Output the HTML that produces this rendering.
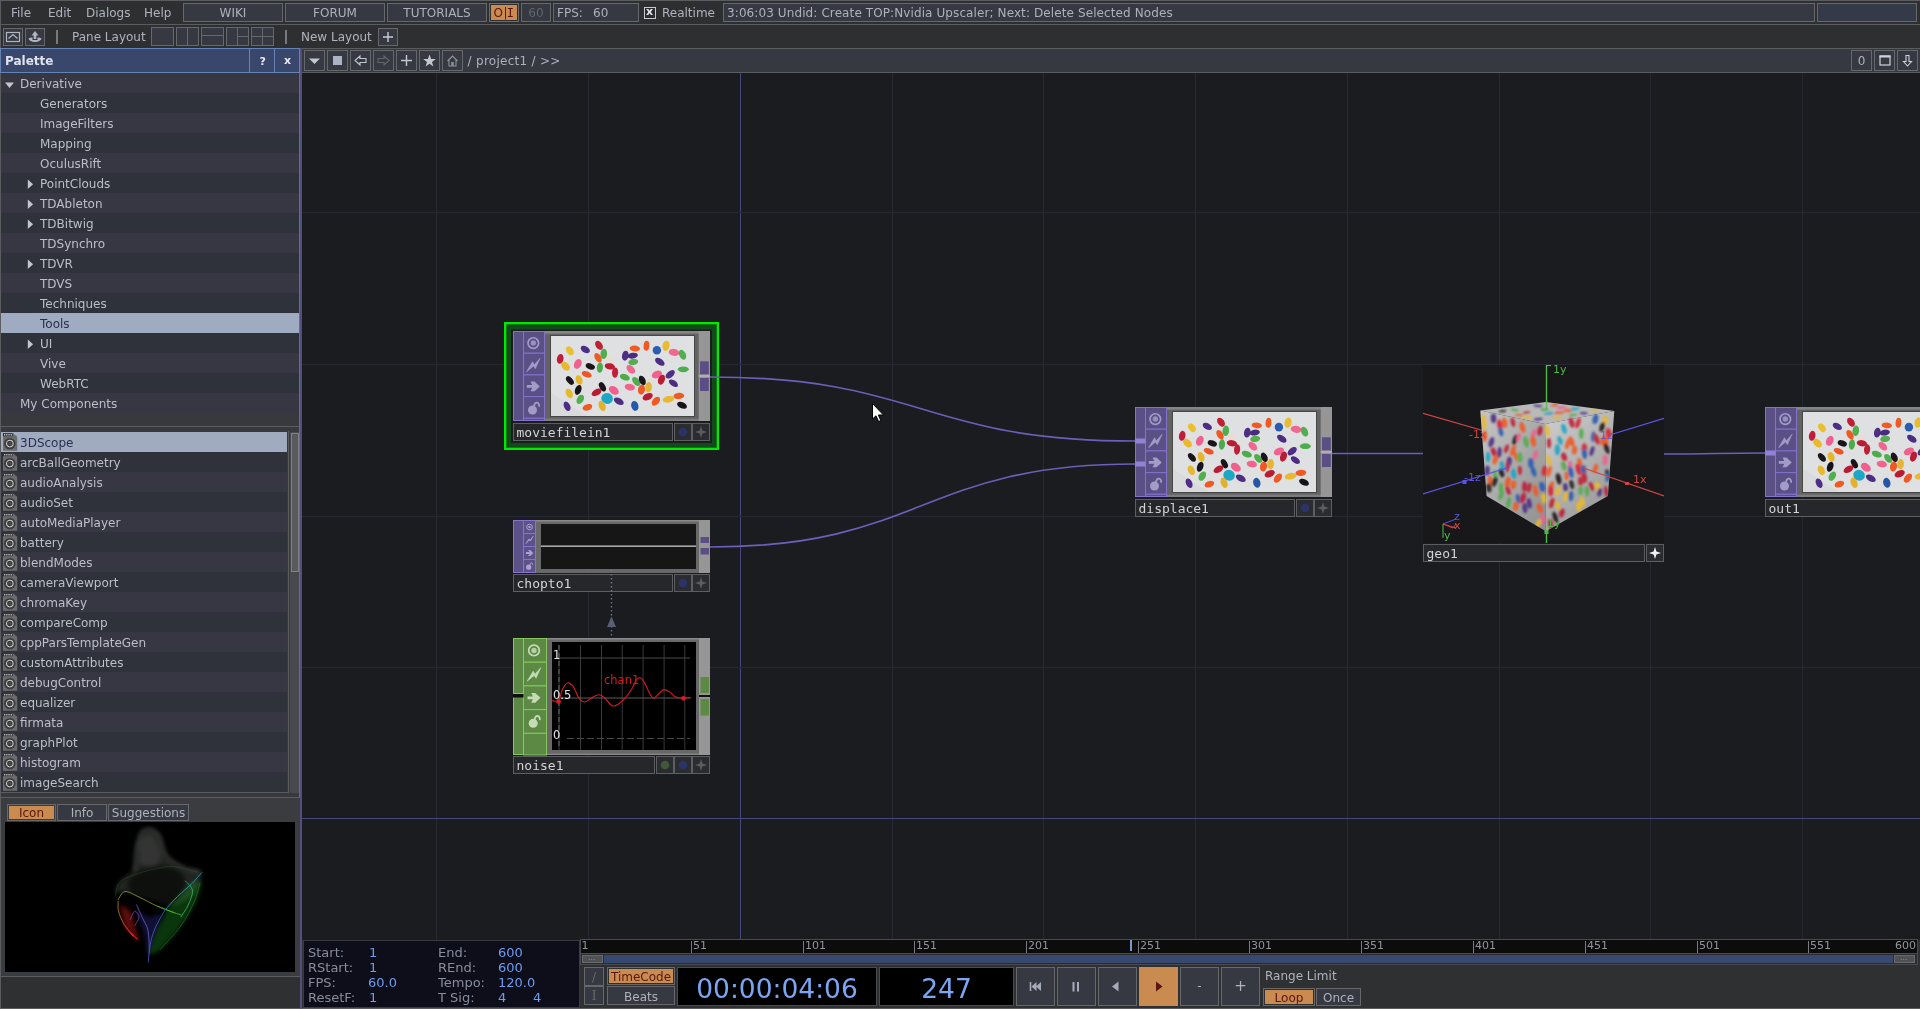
<!DOCTYPE html><html><head><meta charset="utf-8"><title>TouchDesigner</title><style>
*{box-sizing:border-box;margin:0;padding:0}
html,body{width:1920px;height:1009px;overflow:hidden;background:#2e2f31}
body{position:relative;font-family:"DejaVu Sans","Liberation Sans",sans-serif;font-size:12px;color:#adb1bc;line-height:1}
.a{position:absolute}
.btn{position:absolute;background:#373942;border:1px solid #67686c;color:#adb1bc;text-align:center;white-space:nowrap}
.t{position:absolute;white-space:pre;line-height:14px;height:14px}
.row{position:absolute;left:1px;width:298px;height:20px}
.row span{position:absolute;margin-left:1px;top:4px;line-height:14px;white-space:pre;color:#bcbfc8}
.lrow{position:absolute;left:1px;width:286px;height:20px}
.lrow span{position:absolute;left:19px;top:4px;line-height:14px;white-space:pre;color:#bcbfc8}
.mono{font-family:"DejaVu Sans Mono","Liberation Mono",monospace;font-size:13px;color:#d2d2d2}
.nm{position:absolute;background:#26272b;border:1px solid #5d5e62;height:18px}
.nm span{position:absolute;left:3px;top:0px;line-height:16px;white-space:pre}
</style></head><body><div id="root" style="position:absolute;left:0;top:0;width:1920px;height:1009px;will-change:transform">
<div class="a" style="left:0;top:0;width:1920px;height:1px;background:#5b5c5f"></div>
<div class="a" style="left:0;top:1px;width:1px;height:1008px;background:#5b5c5f"></div>
<div class="a" style="left:0;top:24px;width:1920px;height:1px;background:#5b5c5f"></div>
<div class="t" style="left:11px;top:6px;color:#afb3be">File</div>
<div class="t" style="left:48px;top:6px;color:#afb3be">Edit</div>
<div class="t" style="left:86px;top:6px;color:#afb3be">Dialogs</div>
<div class="t" style="left:144px;top:6px;color:#afb3be">Help</div>
<div class="btn" style="left:183px;top:3px;width:100px;height:19px;line-height:19px">WIKI</div>
<div class="btn" style="left:285px;top:3px;width:100px;height:19px;line-height:19px">FORUM</div>
<div class="btn" style="left:387px;top:3px;width:100px;height:19px;line-height:19px">TUTORIALS</div>
<div class="btn" style="left:489px;top:3px;width:30px;height:19px;line-height:19px;background:#c98b4f;border-color:#6b6c70;color:#5a1510;box-shadow:inset 0 0 0 1px #2e2f31;letter-spacing:0.4px">O|<span style="font-family:'DejaVu Sans Mono','Liberation Mono',monospace;margin-left:-1px">I</span></div>
<div class="btn" style="left:521px;top:3px;width:30px;height:19px;line-height:19px;color:#62646c">60</div>
<div class="btn" style="left:553px;top:3px;width:86px;height:19px;line-height:19px;text-align:left;padding-left:3px;white-space:pre;word-spacing:1.3px">FPS:  60</div>
<div class="a" style="left:644px;top:7px;width:12px;height:12px;border:1px solid #c8cad0;background:#2b2c30"></div>
<div class="t" style="left:646px;top:5px;font-size:11px;font-weight:bold;color:#e6e8ee">x</div>
<div class="t" style="left:662px;top:6px;color:#afb3be">Realtime</div>
<div class="btn" style="left:723px;top:3px;width:1092px;height:19px;line-height:19px;text-align:left;padding-left:3px;letter-spacing:0.1px">3:06:03 Undid: Create TOP:Nvidia Upscaler; Next: Delete Selected Nodes</div>
<div class="btn" style="left:1817px;top:3px;width:100px;height:19px;background:#353a48"></div>
<div class="btn" style="left:3px;top:28px;width:20px;height:18px"></div>
<svg class="a" style="left:3px;top:28px" width="20" height="18"><rect x="3.5" y="4.5" width="13" height="9" fill="none" stroke="#b0b5c2" stroke-width="1.2"/><path d="M5.5 10.5 L10 6.5 L14.5 10.5" fill="none" stroke="#b0b5c2" stroke-width="1.2"/></svg>
<div class="btn" style="left:25px;top:28px;width:20px;height:18px"></div>
<svg class="a" style="left:25px;top:28px" width="20" height="18"><path d="M10 3 L13.5 7.5 H11.3 V11 H8.7 V7.5 H6.5 Z" fill="#b0b5c2"/><path d="M3.5 10.5 C5 9.5 6.5 9.2 7.5 9.5 V12 H12.5 V9.5 C13.5 9.2 15 9.5 16.5 10.5 C16 12.5 13 14 10 14 C7 14 4 12.5 3.5 10.5 Z" fill="#b0b5c2"/></svg>
<div class="a" style="left:56px;top:30px;width:2px;height:14px;background:#77797f"></div>
<div class="t" style="left:72px;top:30px;color:#afb3be">Pane Layout</div>
<div class="btn" style="left:151px;top:27px;width:23px;height:19px"></div>
<div class="btn" style="left:176px;top:27px;width:23px;height:19px"></div>
<div class="btn" style="left:201px;top:27px;width:23px;height:19px"></div>
<div class="btn" style="left:226px;top:27px;width:23px;height:19px"></div>
<div class="btn" style="left:251px;top:27px;width:23px;height:19px"></div>
<div class="a" style="left:187px;top:28px;width:1px;height:17px;background:#67686c"></div>
<div class="a" style="left:202px;top:35px;width:21px;height:1px;background:#67686c"></div>
<div class="a" style="left:237px;top:28px;width:1px;height:17px;background:#67686c"></div>
<div class="a" style="left:237px;top:36px;width:11px;height:1px;background:#67686c"></div>
<div class="a" style="left:262px;top:28px;width:1px;height:17px;background:#67686c"></div>
<div class="a" style="left:252px;top:36px;width:21px;height:1px;background:#67686c"></div>
<div class="a" style="left:285px;top:30px;width:2px;height:14px;background:#77797f"></div>
<div class="t" style="left:301px;top:30px;color:#afb3be">New Layout</div>
<div class="btn" style="left:378px;top:28px;width:20px;height:18px"></div>
<svg class="a" style="left:378px;top:28px" width="20" height="18"><path d="M10 4 V14 M5 9 H15" stroke="#c6cad2" stroke-width="1.4"/></svg>
<div class="a" style="left:0px;top:48px;width:300px;height:25px;background:#38476b;border:1px solid #6584b6"></div>
<div class="a" style="left:249px;top:49px;width:1px;height:23px;background:#6584b6"></div>
<div class="a" style="left:274px;top:49px;width:1px;height:23px;background:#6584b6"></div>
<div class="t" style="left:5px;top:53px;font-size:12px;font-weight:bold;color:#dfe3ee;line-height:16px;height:16px">Palette</div>
<div class="t" style="left:259.4px;top:54.5px;font-size:11px;font-weight:bold;color:#e8eaf2">?</div>
<div class="t" style="left:284px;top:53.5px;font-size:11px;font-weight:bold;color:#e8eaf2">x</div>
<div class="a" style="left:1px;top:73px;width:299px;height:354px;background:#38393d"></div>
<div class="row" style="top:73px;background:#363742"><span style="left:18px;">Derivative</span></div>
<svg class="a" style="left:3px;top:79px" width="14" height="12"><path d="M2 3.5 H11 L6.5 9.1 Z" fill="#c3c6cd"/></svg>
<div class="row" style="top:93px;background:#2f313b"><span style="left:38px;">Generators</span></div>
<div class="row" style="top:113px;background:#363742"><span style="left:38px;">ImageFilters</span></div>
<div class="row" style="top:133px;background:#2f313b"><span style="left:38px;">Mapping</span></div>
<div class="row" style="top:153px;background:#363742"><span style="left:38px;">OculusRift</span></div>
<div class="row" style="top:173px;background:#2f313b"><span style="left:38px;">PointClouds</span></div>
<svg class="a" style="left:24px;top:176px" width="11" height="15"><path d="M3.8 3.4 V13 L9.1 8.2 Z" fill="#c3c6cd"/></svg>
<div class="row" style="top:193px;background:#363742"><span style="left:38px;">TDAbleton</span></div>
<svg class="a" style="left:24px;top:196px" width="11" height="15"><path d="M3.8 3.4 V13 L9.1 8.2 Z" fill="#c3c6cd"/></svg>
<div class="row" style="top:213px;background:#2f313b"><span style="left:38px;">TDBitwig</span></div>
<svg class="a" style="left:24px;top:216px" width="11" height="15"><path d="M3.8 3.4 V13 L9.1 8.2 Z" fill="#c3c6cd"/></svg>
<div class="row" style="top:233px;background:#363742"><span style="left:38px;">TDSynchro</span></div>
<div class="row" style="top:253px;background:#2f313b"><span style="left:38px;">TDVR</span></div>
<svg class="a" style="left:24px;top:256px" width="11" height="15"><path d="M3.8 3.4 V13 L9.1 8.2 Z" fill="#c3c6cd"/></svg>
<div class="row" style="top:273px;background:#363742"><span style="left:38px;">TDVS</span></div>
<div class="row" style="top:293px;background:#2f313b"><span style="left:38px;">Techniques</span></div>
<div class="row" style="top:313px;background:#9fabc0"><span style="left:38px;color:#2a3050">Tools</span></div>
<div class="row" style="top:333px;background:#2f313b"><span style="left:38px;">UI</span></div>
<svg class="a" style="left:24px;top:336px" width="11" height="15"><path d="M3.8 3.4 V13 L9.1 8.2 Z" fill="#c3c6cd"/></svg>
<div class="row" style="top:353px;background:#363742"><span style="left:38px;">Vive</span></div>
<div class="row" style="top:373px;background:#2f313b"><span style="left:38px;">WebRTC</span></div>
<div class="row" style="top:393px;background:#363742"><span style="left:18px;">My Components</span></div>
<div class="a" style="left:1px;top:426px;width:299px;height:1px;background:#5b5c5f"></div>
<div class="a" style="left:1px;top:427px;width:299px;height:371px;background:#38393d"></div>
<div class="a" style="left:1px;top:431px;width:288px;height:362px;border:1px solid #5b5c5f;border-top:none;border-left:none"></div>
<div class="lrow" style="top:432px;background:#a0abc0"><span style="color:#2a3050">3DScope</span></div>
<svg class="a" style="left:0px;top:432px" width="20" height="20"><path d="M3 1.2 H13 L17.2 4.8 V18.8 H3 Z" fill="#6c6c6e"/><path d="M3 1.2 H12.6 V4.2 H3 Z" fill="#2c2c2e"/><path d="M4 2.7 H12" stroke="#c4c4c4" stroke-width="1.6" stroke-dasharray="1.3 0.9"/><circle cx="9.8" cy="11.6" r="5.7" fill="#3b3b3d"/><circle cx="9.8" cy="11.6" r="3.3" fill="none" stroke="#cdcdcd" stroke-width="1.05"/><circle cx="9.8" cy="11.6" r="1.3" fill="#505052"/></svg>
<div class="lrow" style="top:452px;background:#2f313b"><span style="">arcBallGeometry</span></div>
<svg class="a" style="left:0px;top:452px" width="20" height="20"><path d="M3 1.2 H13 L17.2 4.8 V18.8 H3 Z" fill="#6c6c6e"/><path d="M3 1.2 H12.6 V4.2 H3 Z" fill="#2c2c2e"/><path d="M4 2.7 H12" stroke="#c4c4c4" stroke-width="1.6" stroke-dasharray="1.3 0.9"/><circle cx="9.8" cy="11.6" r="5.7" fill="#3b3b3d"/><circle cx="9.8" cy="11.6" r="3.3" fill="none" stroke="#cdcdcd" stroke-width="1.05"/><circle cx="9.8" cy="11.6" r="1.3" fill="#505052"/></svg>
<div class="lrow" style="top:472px;background:#363742"><span style="">audioAnalysis</span></div>
<svg class="a" style="left:0px;top:472px" width="20" height="20"><path d="M3 1.2 H13 L17.2 4.8 V18.8 H3 Z" fill="#6c6c6e"/><path d="M3 1.2 H12.6 V4.2 H3 Z" fill="#2c2c2e"/><path d="M4 2.7 H12" stroke="#c4c4c4" stroke-width="1.6" stroke-dasharray="1.3 0.9"/><circle cx="9.8" cy="11.6" r="5.7" fill="#3b3b3d"/><circle cx="9.8" cy="11.6" r="3.3" fill="none" stroke="#cdcdcd" stroke-width="1.05"/><circle cx="9.8" cy="11.6" r="1.3" fill="#505052"/></svg>
<div class="lrow" style="top:492px;background:#2f313b"><span style="">audioSet</span></div>
<svg class="a" style="left:0px;top:492px" width="20" height="20"><path d="M3 1.2 H13 L17.2 4.8 V18.8 H3 Z" fill="#6c6c6e"/><path d="M3 1.2 H12.6 V4.2 H3 Z" fill="#2c2c2e"/><path d="M4 2.7 H12" stroke="#c4c4c4" stroke-width="1.6" stroke-dasharray="1.3 0.9"/><circle cx="9.8" cy="11.6" r="5.7" fill="#3b3b3d"/><circle cx="9.8" cy="11.6" r="3.3" fill="none" stroke="#cdcdcd" stroke-width="1.05"/><circle cx="9.8" cy="11.6" r="1.3" fill="#505052"/></svg>
<div class="lrow" style="top:512px;background:#363742"><span style="">autoMediaPlayer</span></div>
<svg class="a" style="left:0px;top:512px" width="20" height="20"><path d="M3 1.2 H13 L17.2 4.8 V18.8 H3 Z" fill="#6c6c6e"/><path d="M3 1.2 H12.6 V4.2 H3 Z" fill="#2c2c2e"/><path d="M4 2.7 H12" stroke="#c4c4c4" stroke-width="1.6" stroke-dasharray="1.3 0.9"/><circle cx="9.8" cy="11.6" r="5.7" fill="#3b3b3d"/><circle cx="9.8" cy="11.6" r="3.3" fill="none" stroke="#cdcdcd" stroke-width="1.05"/><circle cx="9.8" cy="11.6" r="1.3" fill="#505052"/></svg>
<div class="lrow" style="top:532px;background:#2f313b"><span style="">battery</span></div>
<svg class="a" style="left:0px;top:532px" width="20" height="20"><path d="M3 1.2 H13 L17.2 4.8 V18.8 H3 Z" fill="#6c6c6e"/><path d="M3 1.2 H12.6 V4.2 H3 Z" fill="#2c2c2e"/><path d="M4 2.7 H12" stroke="#c4c4c4" stroke-width="1.6" stroke-dasharray="1.3 0.9"/><circle cx="9.8" cy="11.6" r="5.7" fill="#3b3b3d"/><circle cx="9.8" cy="11.6" r="3.3" fill="none" stroke="#cdcdcd" stroke-width="1.05"/><circle cx="9.8" cy="11.6" r="1.3" fill="#505052"/></svg>
<div class="lrow" style="top:552px;background:#363742"><span style="">blendModes</span></div>
<svg class="a" style="left:0px;top:552px" width="20" height="20"><path d="M3 1.2 H13 L17.2 4.8 V18.8 H3 Z" fill="#6c6c6e"/><path d="M3 1.2 H12.6 V4.2 H3 Z" fill="#2c2c2e"/><path d="M4 2.7 H12" stroke="#c4c4c4" stroke-width="1.6" stroke-dasharray="1.3 0.9"/><circle cx="9.8" cy="11.6" r="5.7" fill="#3b3b3d"/><circle cx="9.8" cy="11.6" r="3.3" fill="none" stroke="#cdcdcd" stroke-width="1.05"/><circle cx="9.8" cy="11.6" r="1.3" fill="#505052"/></svg>
<div class="lrow" style="top:572px;background:#2f313b"><span style="">cameraViewport</span></div>
<svg class="a" style="left:0px;top:572px" width="20" height="20"><path d="M3 1.2 H13 L17.2 4.8 V18.8 H3 Z" fill="#6c6c6e"/><path d="M3 1.2 H12.6 V4.2 H3 Z" fill="#2c2c2e"/><path d="M4 2.7 H12" stroke="#c4c4c4" stroke-width="1.6" stroke-dasharray="1.3 0.9"/><circle cx="9.8" cy="11.6" r="5.7" fill="#3b3b3d"/><circle cx="9.8" cy="11.6" r="3.3" fill="none" stroke="#cdcdcd" stroke-width="1.05"/><circle cx="9.8" cy="11.6" r="1.3" fill="#505052"/></svg>
<div class="lrow" style="top:592px;background:#363742"><span style="">chromaKey</span></div>
<svg class="a" style="left:0px;top:592px" width="20" height="20"><path d="M3 1.2 H13 L17.2 4.8 V18.8 H3 Z" fill="#6c6c6e"/><path d="M3 1.2 H12.6 V4.2 H3 Z" fill="#2c2c2e"/><path d="M4 2.7 H12" stroke="#c4c4c4" stroke-width="1.6" stroke-dasharray="1.3 0.9"/><circle cx="9.8" cy="11.6" r="5.7" fill="#3b3b3d"/><circle cx="9.8" cy="11.6" r="3.3" fill="none" stroke="#cdcdcd" stroke-width="1.05"/><circle cx="9.8" cy="11.6" r="1.3" fill="#505052"/></svg>
<div class="lrow" style="top:612px;background:#2f313b"><span style="">compareComp</span></div>
<svg class="a" style="left:0px;top:612px" width="20" height="20"><path d="M3 1.2 H13 L17.2 4.8 V18.8 H3 Z" fill="#6c6c6e"/><path d="M3 1.2 H12.6 V4.2 H3 Z" fill="#2c2c2e"/><path d="M4 2.7 H12" stroke="#c4c4c4" stroke-width="1.6" stroke-dasharray="1.3 0.9"/><circle cx="9.8" cy="11.6" r="5.7" fill="#3b3b3d"/><circle cx="9.8" cy="11.6" r="3.3" fill="none" stroke="#cdcdcd" stroke-width="1.05"/><circle cx="9.8" cy="11.6" r="1.3" fill="#505052"/></svg>
<div class="lrow" style="top:632px;background:#363742"><span style="">cppParsTemplateGen</span></div>
<svg class="a" style="left:0px;top:632px" width="20" height="20"><path d="M3 1.2 H13 L17.2 4.8 V18.8 H3 Z" fill="#6c6c6e"/><path d="M3 1.2 H12.6 V4.2 H3 Z" fill="#2c2c2e"/><path d="M4 2.7 H12" stroke="#c4c4c4" stroke-width="1.6" stroke-dasharray="1.3 0.9"/><circle cx="9.8" cy="11.6" r="5.7" fill="#3b3b3d"/><circle cx="9.8" cy="11.6" r="3.3" fill="none" stroke="#cdcdcd" stroke-width="1.05"/><circle cx="9.8" cy="11.6" r="1.3" fill="#505052"/></svg>
<div class="lrow" style="top:652px;background:#2f313b"><span style="">customAttributes</span></div>
<svg class="a" style="left:0px;top:652px" width="20" height="20"><path d="M3 1.2 H13 L17.2 4.8 V18.8 H3 Z" fill="#6c6c6e"/><path d="M3 1.2 H12.6 V4.2 H3 Z" fill="#2c2c2e"/><path d="M4 2.7 H12" stroke="#c4c4c4" stroke-width="1.6" stroke-dasharray="1.3 0.9"/><circle cx="9.8" cy="11.6" r="5.7" fill="#3b3b3d"/><circle cx="9.8" cy="11.6" r="3.3" fill="none" stroke="#cdcdcd" stroke-width="1.05"/><circle cx="9.8" cy="11.6" r="1.3" fill="#505052"/></svg>
<div class="lrow" style="top:672px;background:#363742"><span style="">debugControl</span></div>
<svg class="a" style="left:0px;top:672px" width="20" height="20"><path d="M3 1.2 H13 L17.2 4.8 V18.8 H3 Z" fill="#6c6c6e"/><path d="M3 1.2 H12.6 V4.2 H3 Z" fill="#2c2c2e"/><path d="M4 2.7 H12" stroke="#c4c4c4" stroke-width="1.6" stroke-dasharray="1.3 0.9"/><circle cx="9.8" cy="11.6" r="5.7" fill="#3b3b3d"/><circle cx="9.8" cy="11.6" r="3.3" fill="none" stroke="#cdcdcd" stroke-width="1.05"/><circle cx="9.8" cy="11.6" r="1.3" fill="#505052"/></svg>
<div class="lrow" style="top:692px;background:#2f313b"><span style="">equalizer</span></div>
<svg class="a" style="left:0px;top:692px" width="20" height="20"><path d="M3 1.2 H13 L17.2 4.8 V18.8 H3 Z" fill="#6c6c6e"/><path d="M3 1.2 H12.6 V4.2 H3 Z" fill="#2c2c2e"/><path d="M4 2.7 H12" stroke="#c4c4c4" stroke-width="1.6" stroke-dasharray="1.3 0.9"/><circle cx="9.8" cy="11.6" r="5.7" fill="#3b3b3d"/><circle cx="9.8" cy="11.6" r="3.3" fill="none" stroke="#cdcdcd" stroke-width="1.05"/><circle cx="9.8" cy="11.6" r="1.3" fill="#505052"/></svg>
<div class="lrow" style="top:712px;background:#363742"><span style="">firmata</span></div>
<svg class="a" style="left:0px;top:712px" width="20" height="20"><path d="M3 1.2 H13 L17.2 4.8 V18.8 H3 Z" fill="#6c6c6e"/><path d="M3 1.2 H12.6 V4.2 H3 Z" fill="#2c2c2e"/><path d="M4 2.7 H12" stroke="#c4c4c4" stroke-width="1.6" stroke-dasharray="1.3 0.9"/><circle cx="9.8" cy="11.6" r="5.7" fill="#3b3b3d"/><circle cx="9.8" cy="11.6" r="3.3" fill="none" stroke="#cdcdcd" stroke-width="1.05"/><circle cx="9.8" cy="11.6" r="1.3" fill="#505052"/></svg>
<div class="lrow" style="top:732px;background:#2f313b"><span style="">graphPlot</span></div>
<svg class="a" style="left:0px;top:732px" width="20" height="20"><path d="M3 1.2 H13 L17.2 4.8 V18.8 H3 Z" fill="#6c6c6e"/><path d="M3 1.2 H12.6 V4.2 H3 Z" fill="#2c2c2e"/><path d="M4 2.7 H12" stroke="#c4c4c4" stroke-width="1.6" stroke-dasharray="1.3 0.9"/><circle cx="9.8" cy="11.6" r="5.7" fill="#3b3b3d"/><circle cx="9.8" cy="11.6" r="3.3" fill="none" stroke="#cdcdcd" stroke-width="1.05"/><circle cx="9.8" cy="11.6" r="1.3" fill="#505052"/></svg>
<div class="lrow" style="top:752px;background:#363742"><span style="">histogram</span></div>
<svg class="a" style="left:0px;top:752px" width="20" height="20"><path d="M3 1.2 H13 L17.2 4.8 V18.8 H3 Z" fill="#6c6c6e"/><path d="M3 1.2 H12.6 V4.2 H3 Z" fill="#2c2c2e"/><path d="M4 2.7 H12" stroke="#c4c4c4" stroke-width="1.6" stroke-dasharray="1.3 0.9"/><circle cx="9.8" cy="11.6" r="5.7" fill="#3b3b3d"/><circle cx="9.8" cy="11.6" r="3.3" fill="none" stroke="#cdcdcd" stroke-width="1.05"/><circle cx="9.8" cy="11.6" r="1.3" fill="#505052"/></svg>
<div class="lrow" style="top:772px;background:#2f313b"><span style="">imageSearch</span></div>
<svg class="a" style="left:0px;top:772px" width="20" height="20"><path d="M3 1.2 H13 L17.2 4.8 V18.8 H3 Z" fill="#6c6c6e"/><path d="M3 1.2 H12.6 V4.2 H3 Z" fill="#2c2c2e"/><path d="M4 2.7 H12" stroke="#c4c4c4" stroke-width="1.6" stroke-dasharray="1.3 0.9"/><circle cx="9.8" cy="11.6" r="5.7" fill="#3b3b3d"/><circle cx="9.8" cy="11.6" r="3.3" fill="none" stroke="#cdcdcd" stroke-width="1.05"/><circle cx="9.8" cy="11.6" r="1.3" fill="#505052"/></svg>
<div class="a" style="left:290px;top:432px;width:9px;height:361px;background:#48494c"></div>
<div class="a" style="left:291px;top:433px;width:8px;height:139px;background:#58595b;border:1px solid #808183"></div>
<div class="a" style="left:299px;top:73px;width:1px;height:935px;background:#6c6d70"></div>
<div class="a" style="left:1px;top:797px;width:299px;height:1px;background:#5b5c5f"></div>
<div class="a" style="left:1px;top:798px;width:299px;height:178px;background:#3b3c40"></div>
<div class="btn" style="left:7px;top:804px;width:49px;height:17px;line-height:17px;background:#c98b4f;color:#5a1510;box-shadow:inset 0 0 0 1px #3b3c40">Icon</div>
<div class="btn" style="left:57px;top:804px;width:50px;height:17px;line-height:17px">Info</div>
<div class="btn" style="left:108px;top:804px;width:81px;height:17px;line-height:17px">Suggestions</div>
<div class="a" style="left:5px;top:822px;width:290px;height:150px;background:#000"></div>
<svg class="a" style="left:5px;top:822px" width="290" height="150" viewBox="5 822 290 150"><defs><filter id="ib1" x="-30%" y="-30%" width="160%" height="160%"><feGaussianBlur stdDeviation="2.2"/></filter><filter id="ib2" x="-30%" y="-30%" width="160%" height="160%"><feGaussianBlur stdDeviation="0.5"/></filter></defs><path d="M140.5 832.4 C142.0 831.8 146.2 828.2 149.4 828.7 C152.7 829.2 156.9 830.8 159.8 835.4 C162.8 840.0 163.1 850.7 167.3 856.2 C171.5 861.6 179.4 865.3 185.1 868.1 C190.8 870.8 200.0 868.3 201.5 872.5 C202.9 876.7 198.7 887.9 194.0 893.3 C189.3 898.8 180.7 904.2 173.2 905.2 C165.8 906.2 157.6 901.5 149.4 899.3 C141.3 897.0 129.9 892.8 124.2 891.8 C118.5 890.9 116.0 895.1 115.3 893.3 C114.5 891.6 116.7 885.4 119.7 881.4 C122.7 877.5 130.4 875.3 133.1 869.6 C135.8 863.9 135.6 851.0 136.1 847.3 Z" fill="#2c2e2c" opacity="0.8" filter="url(#ib1)"/><path d="M134.6 871.0 C134.9 867.1 135.3 853.7 136.4 847.3 C137.5 840.8 139.1 835.4 141.3 832.4 C143.5 829.4 146.5 828.6 149.4 829.1 C152.4 829.6 156.3 831.0 159.1 835.4 C162.0 839.8 162.4 850.1 166.5 855.4 C170.6 860.8 177.9 864.5 183.6 867.3 C189.3 870.1 197.9 871.4 200.7 872.2" fill="none" stroke="#6a6c6a" stroke-width="2.2" opacity="0.55" filter="url(#ib1)"/><path d="M139.0 839.8 C140.8 838.8 146.5 833.6 149.4 833.9 C152.4 834.1 154.9 837.4 156.9 841.3 C158.9 845.3 162.1 853.5 161.3 857.7 C160.6 861.9 156.1 865.6 152.4 866.6 C148.7 867.6 141.3 864.1 139.0 863.6 Z" fill="#484a48" opacity="0.45" filter="url(#ib1)"/><path d="M139.0 871.0 C142.8 870.3 154.2 866.1 161.3 866.6 C168.5 867.1 178.4 869.6 182.1 874.0 C185.9 878.5 186.1 887.9 183.6 893.3 C181.1 898.8 173.5 905.5 167.3 906.7 C161.1 907.9 152.7 903.2 146.5 900.8 C140.3 898.3 133.1 895.3 130.1 891.8 C127.2 888.4 128.9 881.9 128.6 880.0 Z" fill="#000" opacity="0.55" filter="url(#ib1)"/><path d="M167.3 908.9 C170.7 905.1 182.5 890.5 188.1 885.9 C193.7 881.3 199.2 879.2 200.7 881.4 C202.2 883.7 200.1 892.1 197.0 899.3 C193.9 906.5 188.3 916.1 182.1 924.5 C175.9 933.0 165.3 945.1 159.8 949.8 C154.4 954.5 150.2 955.7 149.4 952.8 C148.7 949.8 154.4 935.4 155.4 932.0 Z" fill="#1d8f22" opacity="0.38" filter="url(#ib1)"/><path d="M119.7 905.2 C121.5 906.2 127.6 907.7 130.1 911.2 C132.6 914.6 133.1 921.1 134.6 926.0 C136.1 931.0 139.3 939.2 139.0 940.9 C138.8 942.6 135.6 939.2 133.1 936.4 C130.6 933.7 125.7 926.5 124.2 924.5 Z" fill="#d01a1a" opacity="0.45" filter="url(#ib1)"/><path d="M134.6 908.2 C137.1 909.7 145.0 916.1 149.4 917.1 C153.9 918.1 160.6 910.7 161.3 914.1 C162.1 917.6 156.0 931.0 153.9 937.9 C151.8 944.9 150.2 956.2 148.7 955.7 C147.2 955.3 145.6 938.4 145.0 934.9 Z" fill="#2a2a8a" opacity="0.4" filter="url(#ib1)"/><g filter="url(#ib2)" opacity="0.85"><path d="M115.6 896.3 C116.0 894.3 116.1 887.6 118.2 884.4 C120.4 881.2 122.9 879.5 128.6 877.0 C134.3 874.5 145.0 871.3 152.4 869.6 C159.8 867.8 165.8 866.2 173.2 866.6 C180.7 867.0 193.0 870.9 197.0 871.8" stroke="#2d5a2d" stroke-width="0.8" fill="none" opacity="0.7"/><path d="M117.9 900.0 C119.1 898.6 121.4 892.0 124.9 891.5 C128.4 891.1 133.7 894.6 139.0 897.0 C144.4 899.5 150.9 903.3 156.9 906.0 C162.8 908.6 171.7 911.8 174.7 912.9" stroke="#9fae2a" stroke-width="0.9" fill="none"/><path d="M156.9 906.0 C158.6 906.6 164.3 908.8 167.3 910.0 C170.2 911.1 172.4 912.1 174.7 912.9 C177.1 913.8 180.3 914.6 181.4 914.9" stroke="#3fc43a" stroke-width="1" fill="none"/><path d="M118.2 900.8 C118.3 902.5 117.5 907.2 118.5 911.2 C119.5 915.1 121.8 920.3 124.2 924.5 C126.6 928.8 131.6 934.4 133.1 936.4" stroke="#d0a030" stroke-width="0.9" fill="none" opacity="0.9"/><path d="M124.2 924.5 C125.2 925.8 127.9 929.5 130.1 932.0 C132.4 934.4 136.3 938.2 137.6 939.4" stroke="#e02020" stroke-width="1.2" fill="none"/><path d="M136.4 904.5 C137.3 906.6 140.1 912.8 142.0 917.1 C143.9 921.4 146.7 924.5 148.0 930.5 C149.2 936.4 149.2 949.1 149.4 952.8" stroke="#7a62c8" stroke-width="0.9" fill="none"/><path d="M130.1 920.1 C130.9 918.6 133.1 911.7 134.6 911.2 C136.1 910.7 139.0 914.6 139.0 917.1 C139.0 919.6 135.3 924.5 134.6 926.0" stroke="#9a6ad0" stroke-width="0.8" fill="none" opacity="0.8"/><path d="M165.0 910.0 C163.7 912.4 159.1 919.9 156.9 924.5 C154.6 929.2 153.0 933.2 151.7 937.9 C150.4 942.6 149.7 948.7 149.1 952.8 C148.6 956.9 148.4 960.8 148.3 962.4" stroke="#4c58d8" stroke-width="1" fill="none"/><path d="M165.0 910.0 C167.2 907.7 173.3 900.6 177.7 896.3 C182.0 892.0 187.0 888.4 191.1 884.4 C195.1 880.5 200.0 874.5 201.8 872.5" stroke="#3aa6c8" stroke-width="0.9" fill="none"/><path d="M185.1 880.7 C186.3 882.3 192.0 886.3 192.5 890.4 C193.0 894.4 190.1 900.8 188.1 905.2 C186.1 909.7 181.9 915.1 180.7 917.1" stroke="#46b878" stroke-width="0.9" fill="none"/><path d="M200.0 882.9 C199.0 886.2 197.2 895.1 194.0 902.2 C190.8 909.4 186.3 918.1 180.7 926.0 C175.0 934.0 163.3 945.8 159.8 949.8" stroke="#2a8a2a" stroke-width="0.8" fill="none" opacity="0.8"/></g></svg>
<div class="a" style="left:1px;top:976px;width:299px;height:1px;background:#5b5c5f"></div>
<div class="a" style="left:1px;top:977px;width:299px;height:31px;background:#2f3032"></div>
<div class="a" style="left:0px;top:1008px;width:1920px;height:1px;background:#5b5c5f"></div>
<div class="a" style="left:300px;top:48px;width:2px;height:961px;background:#524f80"></div>
<div class="a" style="left:302px;top:48px;width:1618px;height:25px;background:#373942;border-top:1px solid #5b5c5f;border-bottom:1px solid #5b5c5f"></div>
<div class="btn" style="left:304px;top:50px;width:21px;height:21px"></div>
<div class="btn" style="left:327px;top:50px;width:21px;height:21px"></div>
<div class="btn" style="left:350px;top:50px;width:21px;height:21px"></div>
<div class="btn" style="left:373px;top:50px;width:21px;height:21px"></div>
<div class="btn" style="left:396px;top:50px;width:21px;height:21px"></div>
<div class="btn" style="left:419px;top:50px;width:21px;height:21px"></div>
<div class="btn" style="left:442px;top:50px;width:21px;height:21px"></div>
<svg class="a" style="left:304px;top:50px" width="161" height="21">
<path d="M5 8.5 H16 L10.5 14 Z" fill="#c3c7d0"/>
<rect x="29" y="6" width="9" height="9" fill="#aab2c4"/>
<path d="M51 10.5 L56 6 V8.5 H62 V12.5 H56 V15 Z" fill="none" stroke="#c3c7d0" stroke-width="1.1"/>
<path d="M85 10.5 L80 6 V8.5 H74 V12.5 H80 V15 Z" fill="none" stroke="#62656e" stroke-width="1.1"/>
<path d="M102.5 5 V16 M97 10.5 H108" stroke="#c3c7d0" stroke-width="1.4"/>
<path d="M125.5 4.5 L127.1 9 L131.8 9.1 L128 12 L129.4 16.5 L125.5 13.8 L121.6 16.5 L123 12 L119.2 9.1 L123.9 9 Z" fill="#c3c7d0"/>
<path d="M143.5 11 L148.5 6 L153.5 11 M145 10 V16 H152 V10" fill="none" stroke="#8f939c" stroke-width="1.1"/><rect x="147.3" y="12" width="2.4" height="4" fill="#8f939c"/>
</svg>
<div class="t" style="left:467.6px;top:54px;letter-spacing:0.27px;color:#adb1bc">/ project1 / &gt;&gt;</div>
<div class="btn" style="left:1851px;top:50px;width:21px;height:21px;line-height:21px">0</div>
<div class="btn" style="left:1874px;top:50px;width:21px;height:21px"></div>
<div class="btn" style="left:1897px;top:50px;width:21px;height:21px"></div>
<svg class="a" style="left:1874px;top:50px" width="44" height="21">
<rect x="6" y="6" width="10" height="9" fill="none" stroke="#d0d3da" stroke-width="1.2"/><rect x="5.5" y="5.5" width="11" height="2" fill="#d0d3da"/>
<path d="M33.5 16 L29.5 11.5 H32 V5.5 H35 V11.5 H37.5 Z" fill="none" stroke="#d0d3da" stroke-width="1.1"/>
</svg>
<svg class="a" style="left:302px;top:73px" width="1618" height="867" viewBox="302 73 1618 867" shape-rendering="auto"><rect x="302" y="73" width="1618" height="867" fill="#1b1c20"/><rect x="436" y="73" width="1" height="867" fill="#272831"/><rect x="588" y="73" width="1" height="867" fill="#272831"/><rect x="740" y="73" width="1" height="867" fill="#45477a"/><rect x="892" y="73" width="1" height="867" fill="#272831"/><rect x="1043" y="73" width="1" height="867" fill="#272831"/><rect x="1195" y="73" width="1" height="867" fill="#272831"/><rect x="1347" y="73" width="1" height="867" fill="#272831"/><rect x="1499" y="73" width="1" height="867" fill="#272831"/><rect x="1650" y="73" width="1" height="867" fill="#272831"/><rect x="1802" y="73" width="1" height="867" fill="#272831"/><rect x="302" y="212" width="1618" height="1" fill="#272831"/><rect x="302" y="364" width="1618" height="1" fill="#272831"/><rect x="302" y="516" width="1618" height="1" fill="#272831"/><rect x="302" y="667" width="1618" height="1" fill="#272831"/><rect x="302" y="818" width="1618" height="1" fill="#45477a"/><rect x="504" y="322" width="215" height="128" fill="#00ea00"/><rect x="506.3" y="324.3" width="210.4" height="123.4" fill="#134a1a"/><rect x="511" y="329.5" width="201" height="113.5" fill="#1b1c1e"/><path d="M710 377 C922 377 922 441 1135 441" fill="none" stroke="#6e5dba" stroke-width="1.7"/><path d="M710 547 C922 547 922 464 1135 464" fill="none" stroke="#6e5dba" stroke-width="1.7"/><path d="M1332 453.5 H1423" fill="none" stroke="#6e5dba" stroke-width="1.7"/><path d="M1664 454 C1715 454 1715 453 1766 453" fill="none" stroke="#6e5dba" stroke-width="1.7"/><rect x="513" y="331" width="32" height="90" fill="#5b5086"/><rect x="513.5" y="331.5" width="10" height="89" fill="#5b5086" stroke="#8472cc"/><rect x="523.5" y="331.5" width="21" height="21.7" fill="#5b5086" stroke="#8472cc"/><rect x="523.5" y="353.2" width="21" height="21.7" fill="#5b5086" stroke="#8472cc"/><rect x="523.5" y="374.9" width="21" height="21.7" fill="#5b5086" stroke="#8472cc"/><rect x="523.5" y="396.6" width="21" height="21.7" fill="#5b5086" stroke="#8472cc"/><rect x="523.5" y="418.3" width="21" height="2.2" fill="#5b5086" stroke="#8472cc"/><circle cx="533.3" cy="343.05" r="5.3" fill="none" stroke="#a29cc8" stroke-width="1.7"/><circle cx="533.3" cy="343.05" r="2.7" fill="#a29cc8" opacity="0.85"/><path d="M526.5 371.75 L532.5 361.75 L534.3 364.75 L540.0999999999999 358.25 L535.3 368.75 L533.5 366.05 Z" fill="#a29cc8" stroke="#a29cc8" stroke-width="0.6" stroke-linejoin="round"/><path d="M526.8 385.05 H532.3 L530.5 381.55 H534.5 L539.8 386.45 L534.5 391.34999999999997 H530.5 L532.3 387.84999999999997 H526.8 Z" fill="#a29cc8"/><circle cx="532.5" cy="409.95" r="4.5" fill="#a29cc8"/><path d="M534.0999999999999 406.04999999999995 C534.3 400.84999999999997 539.9 401.84999999999997 539.0999999999999 406.74999999999994" fill="none" stroke="#a29cc8" stroke-width="1.8"/><rect x="545" y="331" width="154" height="90" fill="#636363"/><rect x="545" y="331" width="154" height="2.6" fill="#858585"/><rect x="545" y="418.6" width="154" height="2.4" fill="#7c7c7c"/><rect x="550" y="335" width="145" height="82" fill="#474747"/><rect x="551" y="336" width="143" height="80" fill="#dfe0e2"/><path d="M551 416 V393 L587 416 Z" fill="#d9dadc"/><ellipse cx="569.9" cy="350.8" rx="4.8" ry="3.3" fill="#e9c02f" transform="rotate(55 569.9 350.8)"/><ellipse cx="585.3" cy="349.5" rx="5.0" ry="3.1" fill="#4e2d86" transform="rotate(30 585.3 349.5)"/><ellipse cx="599.0" cy="345.3" rx="5.0" ry="3.3" fill="#c02036" transform="rotate(55 599.0 345.3)"/><ellipse cx="603.8" cy="353.9" rx="5.2" ry="3.3" fill="#4fae4f" transform="rotate(95 603.8 353.9)"/><ellipse cx="598.0" cy="357.8" rx="5.2" ry="3.1" fill="#ef5a22" transform="rotate(60 598.0 357.8)"/><ellipse cx="560.2" cy="358.9" rx="5.0" ry="3.3" fill="#be1e3a" transform="rotate(100 560.2 358.9)"/><ellipse cx="565.5" cy="366.2" rx="5.2" ry="3.5" fill="#e8b82e" transform="rotate(45 565.5 366.2)"/><ellipse cx="577.8" cy="363.9" rx="5.2" ry="3.6" fill="#f0608e" transform="rotate(115 577.8 363.9)"/><ellipse cx="590.3" cy="366.4" rx="4.8" ry="2.9" fill="#1a1418" transform="rotate(20 590.3 366.4)"/><ellipse cx="609.9" cy="360.1" rx="4.8" ry="2.9" fill="#e6ddd4" transform="rotate(20 609.9 360.1)"/><ellipse cx="599.9" cy="367.6" rx="5.2" ry="3.1" fill="#4cab4c" transform="rotate(95 599.9 367.6)"/><ellipse cx="609.9" cy="366.4" rx="5.2" ry="3.1" fill="#b81d34" transform="rotate(10 609.9 366.4)"/><ellipse cx="615.1" cy="372.6" rx="5.2" ry="3.1" fill="#be2038" transform="rotate(95 615.1 372.6)"/><ellipse cx="586.7" cy="374.3" rx="5.2" ry="2.9" fill="#ee5524" transform="rotate(20 586.7 374.3)"/><ellipse cx="579.1" cy="380.0" rx="5.0" ry="3.3" fill="#e5b52e" transform="rotate(70 579.1 380.0)"/><ellipse cx="569.9" cy="380.5" rx="5.0" ry="2.9" fill="#191418" transform="rotate(50 569.9 380.5)"/><ellipse cx="578.2" cy="389.9" rx="5.2" ry="3.1" fill="#17131a" transform="rotate(110 578.2 389.9)"/><ellipse cx="569.3" cy="393.4" rx="5.0" ry="3.3" fill="#e6b82c" transform="rotate(65 569.3 393.4)"/><ellipse cx="580.3" cy="399.3" rx="5.0" ry="3.3" fill="#4fb04d" transform="rotate(120 580.3 399.3)"/><ellipse cx="567.1" cy="406.3" rx="5.0" ry="3.1" fill="#4c2c84" transform="rotate(65 567.1 406.3)"/><ellipse cx="587.4" cy="407.3" rx="5.0" ry="3.1" fill="#f05a20" transform="rotate(-20 587.4 407.3)"/><ellipse cx="602.4" cy="386.8" rx="5.0" ry="2.9" fill="#18141a" transform="rotate(60 602.4 386.8)"/><ellipse cx="596.5" cy="392.4" rx="5.4" ry="3.1" fill="#b81b32" transform="rotate(-30 596.5 392.4)"/><ellipse cx="613.8" cy="390.4" rx="5.5" ry="3.8" fill="#f0608c" transform="rotate(35 613.8 390.4)"/><ellipse cx="607.1" cy="398.4" rx="5.9" ry="5.4" fill="#1ea6c6" transform="rotate(20 607.1 398.4)"/><ellipse cx="602.1" cy="405.9" rx="5.4" ry="3.3" fill="#e3b030" transform="rotate(70 602.1 405.9)"/><ellipse cx="618.8" cy="401.3" rx="5.4" ry="3.1" fill="#4b2d82" transform="rotate(30 618.8 401.3)"/><ellipse cx="634.8" cy="348.5" rx="5.2" ry="2.9" fill="#ef5b23" transform="rotate(5 634.8 348.5)"/><ellipse cx="625.3" cy="355.7" rx="5.0" ry="3.3" fill="#4d2e83" transform="rotate(100 625.3 355.7)"/><ellipse cx="632.7" cy="355.7" rx="5.2" ry="2.9" fill="#4a2b80" transform="rotate(-10 632.7 355.7)"/><ellipse cx="633.2" cy="362.0" rx="5.0" ry="3.1" fill="#55ad50" transform="rotate(-10 633.2 362.0)"/><ellipse cx="630.8" cy="369.3" rx="5.2" ry="3.3" fill="#f0668e" transform="rotate(45 630.8 369.3)"/><ellipse cx="624.8" cy="377.2" rx="5.2" ry="3.1" fill="#4eab4c" transform="rotate(20 624.8 377.2)"/><ellipse cx="636.2" cy="381.5" rx="5.2" ry="3.1" fill="#50ac4e" transform="rotate(50 636.2 381.5)"/><ellipse cx="642.3" cy="380.4" rx="5.0" ry="3.1" fill="#1a151a" transform="rotate(65 642.3 380.4)"/><ellipse cx="629.8" cy="387.2" rx="5.2" ry="3.3" fill="#f0648d" transform="rotate(10 629.8 387.2)"/><ellipse cx="648.6" cy="387.2" rx="5.2" ry="3.3" fill="#e4b434" transform="rotate(95 648.6 387.2)"/><ellipse cx="641.5" cy="389.7" rx="5.0" ry="3.5" fill="#ee5824" transform="rotate(100 641.5 389.7)"/><ellipse cx="647.7" cy="396.8" rx="5.4" ry="3.3" fill="#b91c32" transform="rotate(-25 647.7 396.8)"/><ellipse cx="655.9" cy="401.2" rx="5.2" ry="3.3" fill="#f05a22" transform="rotate(-50 655.9 401.2)"/><ellipse cx="634.8" cy="405.9" rx="5.0" ry="3.6" fill="#2458a6" transform="rotate(75 634.8 405.9)"/><ellipse cx="646.5" cy="345.8" rx="5.0" ry="2.9" fill="#ee5a24" transform="rotate(95 646.5 345.8)"/><ellipse cx="656.9" cy="350.2" rx="4.2" ry="4.3" fill="#2a5cb0" transform="rotate(0 656.9 350.2)"/><ellipse cx="666.0" cy="345.8" rx="5.2" ry="3.5" fill="#e8bc30" transform="rotate(100 666.0 345.8)"/><ellipse cx="674.0" cy="352.4" rx="5.4" ry="3.5" fill="#f06a90" transform="rotate(10 674.0 352.4)"/><ellipse cx="682.5" cy="354.7" rx="5.2" ry="3.3" fill="#52ad50" transform="rotate(65 682.5 354.7)"/><ellipse cx="659.8" cy="361.8" rx="5.4" ry="3.1" fill="#4c2d83" transform="rotate(35 659.8 361.8)"/><ellipse cx="683.3" cy="369.3" rx="5.5" ry="2.9" fill="#4cae4a" transform="rotate(0 683.3 369.3)"/><ellipse cx="656.9" cy="374.5" rx="5.4" ry="3.5" fill="#f0628c" transform="rotate(-25 656.9 374.5)"/><ellipse cx="670.2" cy="374.3" rx="5.4" ry="3.1" fill="#4d2e84" transform="rotate(-40 670.2 374.3)"/><ellipse cx="661.5" cy="379.7" rx="5.2" ry="3.3" fill="#b81d34" transform="rotate(110 661.5 379.7)"/><ellipse cx="673.4" cy="383.2" rx="5.2" ry="2.9" fill="#4b2c82" transform="rotate(35 673.4 383.2)"/><ellipse cx="668.5" cy="399.3" rx="5.9" ry="3.3" fill="#e8b830" transform="rotate(-10 668.5 399.3)"/><ellipse cx="678.9" cy="395.9" rx="5.4" ry="3.1" fill="#ef5a23" transform="rotate(-5 678.9 395.9)"/><ellipse cx="682.0" cy="405.3" rx="5.2" ry="3.1" fill="#17131a" transform="rotate(25 682.0 405.3)"/><rect x="698.7" y="331" width="11.3" height="90" fill="#969696"/><rect x="700" y="361.3" width="8.8" height="13" fill="#5a4e84"/><rect x="700" y="378" width="8.8" height="13" fill="#5a4e84"/><rect x="698.7" y="375" width="11.3" height="2" fill="#b0b0b0"/><rect x="513.5" y="423.5" width="159" height="17" fill="#26272b" stroke="#5d5e62"/><text x="516.5" y="436.5" font-family="DejaVu Sans Mono,Liberation Mono,monospace" font-size="13" fill="#d4d4d4">moviefilein1</text><rect x="674.5" y="423.5" width="17" height="17" fill="#2b2c30" stroke="#5d5e62"/><circle cx="683" cy="432" r="4.3" fill="#2b3467"/><rect x="692.5" y="423.5" width="17" height="17" fill="#2b2c30" stroke="#5d5e62"/><path d="M701 426 L702.4 430.6 L707 432 L702.4 433.4 L701 438 L699.6 433.4 L695 432 L699.6 430.6 Z" fill="#5c5c5e"/><rect x="1135" y="407" width="32" height="90" fill="#5b5086"/><rect x="1135.5" y="407.5" width="10" height="89" fill="#5b5086" stroke="#8472cc"/><rect x="1145.5" y="407.5" width="21" height="21.7" fill="#5b5086" stroke="#8472cc"/><rect x="1145.5" y="429.2" width="21" height="21.7" fill="#5b5086" stroke="#8472cc"/><rect x="1145.5" y="450.9" width="21" height="21.7" fill="#5b5086" stroke="#8472cc"/><rect x="1145.5" y="472.6" width="21" height="21.7" fill="#5b5086" stroke="#8472cc"/><rect x="1145.5" y="494.3" width="21" height="2.2" fill="#5b5086" stroke="#8472cc"/><circle cx="1155.3" cy="419.05" r="5.3" fill="none" stroke="#a29cc8" stroke-width="1.7"/><circle cx="1155.3" cy="419.05" r="2.7" fill="#a29cc8" opacity="0.85"/><path d="M1148.5 447.75 L1154.5 437.75 L1156.3 440.75 L1162.1 434.25 L1157.3 444.75 L1155.5 442.05 Z" fill="#a29cc8" stroke="#a29cc8" stroke-width="0.6" stroke-linejoin="round"/><path d="M1148.8 461.05 H1154.3 L1152.5 457.55 H1156.5 L1161.8 462.45 L1156.5 467.34999999999997 H1152.5 L1154.3 463.84999999999997 H1148.8 Z" fill="#a29cc8"/><circle cx="1154.5" cy="485.95" r="4.5" fill="#a29cc8"/><path d="M1156.1 482.04999999999995 C1156.3 476.84999999999997 1161.8999999999999 477.84999999999997 1161.1 482.74999999999994" fill="none" stroke="#a29cc8" stroke-width="1.8"/><rect x="1135" y="438.5" width="10.5" height="5" fill="#9083d6"/><rect x="1135" y="461.5" width="10.5" height="5" fill="#9083d6"/><rect x="1167" y="407" width="154" height="90" fill="#636363"/><rect x="1167" y="407" width="154" height="2.6" fill="#858585"/><rect x="1167" y="494.6" width="154" height="2.4" fill="#7c7c7c"/><rect x="1172" y="411" width="145" height="82" fill="#474747"/><rect x="1173" y="412" width="143" height="80" fill="#dfe0e2"/><path d="M1173 492 V469 L1209 492 Z" fill="#d9dadc"/><ellipse cx="1191.9" cy="427.7" rx="4.8" ry="3.3" fill="#e9c02f" transform="rotate(55 1191.9 427.7)"/><ellipse cx="1207.3" cy="426.4" rx="5.0" ry="3.1" fill="#4e2d86" transform="rotate(30 1207.3 426.4)"/><ellipse cx="1221.0" cy="422.2" rx="5.0" ry="3.3" fill="#c02036" transform="rotate(55 1221.0 422.2)"/><ellipse cx="1225.8" cy="430.8" rx="5.2" ry="3.3" fill="#4fae4f" transform="rotate(95 1225.8 430.8)"/><ellipse cx="1220.0" cy="434.7" rx="5.2" ry="3.1" fill="#ef5a22" transform="rotate(60 1220.0 434.7)"/><ellipse cx="1182.2" cy="435.8" rx="5.0" ry="3.3" fill="#be1e3a" transform="rotate(100 1182.2 435.8)"/><ellipse cx="1187.5" cy="443.1" rx="5.2" ry="3.5" fill="#e8b82e" transform="rotate(45 1187.5 443.1)"/><ellipse cx="1199.8" cy="440.8" rx="5.2" ry="3.6" fill="#f0608e" transform="rotate(115 1199.8 440.8)"/><ellipse cx="1212.3" cy="443.3" rx="4.8" ry="2.9" fill="#1a1418" transform="rotate(20 1212.3 443.3)"/><ellipse cx="1231.9" cy="437.0" rx="4.8" ry="2.9" fill="#e6ddd4" transform="rotate(20 1231.9 437.0)"/><ellipse cx="1221.9" cy="444.5" rx="5.2" ry="3.1" fill="#4cab4c" transform="rotate(95 1221.9 444.5)"/><ellipse cx="1231.9" cy="443.3" rx="5.2" ry="3.1" fill="#b81d34" transform="rotate(10 1231.9 443.3)"/><ellipse cx="1237.1" cy="449.5" rx="5.2" ry="3.1" fill="#be2038" transform="rotate(95 1237.1 449.5)"/><ellipse cx="1208.7" cy="451.2" rx="5.2" ry="2.9" fill="#ee5524" transform="rotate(20 1208.7 451.2)"/><ellipse cx="1201.1" cy="456.9" rx="5.0" ry="3.3" fill="#e5b52e" transform="rotate(70 1201.1 456.9)"/><ellipse cx="1191.9" cy="457.4" rx="5.0" ry="2.9" fill="#191418" transform="rotate(50 1191.9 457.4)"/><ellipse cx="1200.2" cy="466.8" rx="5.2" ry="3.1" fill="#17131a" transform="rotate(110 1200.2 466.8)"/><ellipse cx="1191.3" cy="470.3" rx="5.0" ry="3.3" fill="#e6b82c" transform="rotate(65 1191.3 470.3)"/><ellipse cx="1202.3" cy="476.2" rx="5.0" ry="3.3" fill="#4fb04d" transform="rotate(120 1202.3 476.2)"/><ellipse cx="1189.1" cy="483.2" rx="5.0" ry="3.1" fill="#4c2c84" transform="rotate(65 1189.1 483.2)"/><ellipse cx="1209.4" cy="484.2" rx="5.0" ry="3.1" fill="#f05a20" transform="rotate(-20 1209.4 484.2)"/><ellipse cx="1224.4" cy="463.7" rx="5.0" ry="2.9" fill="#18141a" transform="rotate(60 1224.4 463.7)"/><ellipse cx="1218.5" cy="469.3" rx="5.4" ry="3.1" fill="#b81b32" transform="rotate(-30 1218.5 469.3)"/><ellipse cx="1235.8" cy="467.3" rx="5.5" ry="3.8" fill="#f0608c" transform="rotate(35 1235.8 467.3)"/><ellipse cx="1229.1" cy="475.3" rx="5.9" ry="5.4" fill="#1ea6c6" transform="rotate(20 1229.1 475.3)"/><ellipse cx="1224.1" cy="482.8" rx="5.4" ry="3.3" fill="#e3b030" transform="rotate(70 1224.1 482.8)"/><ellipse cx="1240.8" cy="478.2" rx="5.4" ry="3.1" fill="#4b2d82" transform="rotate(30 1240.8 478.2)"/><ellipse cx="1256.8" cy="425.4" rx="5.2" ry="2.9" fill="#ef5b23" transform="rotate(5 1256.8 425.4)"/><ellipse cx="1247.3" cy="432.6" rx="5.0" ry="3.3" fill="#4d2e83" transform="rotate(100 1247.3 432.6)"/><ellipse cx="1254.7" cy="432.6" rx="5.2" ry="2.9" fill="#4a2b80" transform="rotate(-10 1254.7 432.6)"/><ellipse cx="1255.2" cy="438.9" rx="5.0" ry="3.1" fill="#55ad50" transform="rotate(-10 1255.2 438.9)"/><ellipse cx="1252.8" cy="446.2" rx="5.2" ry="3.3" fill="#f0668e" transform="rotate(45 1252.8 446.2)"/><ellipse cx="1246.8" cy="454.1" rx="5.2" ry="3.1" fill="#4eab4c" transform="rotate(20 1246.8 454.1)"/><ellipse cx="1258.2" cy="458.4" rx="5.2" ry="3.1" fill="#50ac4e" transform="rotate(50 1258.2 458.4)"/><ellipse cx="1264.3" cy="457.3" rx="5.0" ry="3.1" fill="#1a151a" transform="rotate(65 1264.3 457.3)"/><ellipse cx="1251.8" cy="464.1" rx="5.2" ry="3.3" fill="#f0648d" transform="rotate(10 1251.8 464.1)"/><ellipse cx="1270.6" cy="464.1" rx="5.2" ry="3.3" fill="#e4b434" transform="rotate(95 1270.6 464.1)"/><ellipse cx="1263.5" cy="466.6" rx="5.0" ry="3.5" fill="#ee5824" transform="rotate(100 1263.5 466.6)"/><ellipse cx="1269.7" cy="473.7" rx="5.4" ry="3.3" fill="#b91c32" transform="rotate(-25 1269.7 473.7)"/><ellipse cx="1277.9" cy="478.1" rx="5.2" ry="3.3" fill="#f05a22" transform="rotate(-50 1277.9 478.1)"/><ellipse cx="1256.8" cy="482.8" rx="5.0" ry="3.6" fill="#2458a6" transform="rotate(75 1256.8 482.8)"/><ellipse cx="1268.5" cy="422.7" rx="5.0" ry="2.9" fill="#ee5a24" transform="rotate(95 1268.5 422.7)"/><ellipse cx="1278.9" cy="427.1" rx="4.2" ry="4.3" fill="#2a5cb0" transform="rotate(0 1278.9 427.1)"/><ellipse cx="1288.0" cy="422.7" rx="5.2" ry="3.5" fill="#e8bc30" transform="rotate(100 1288.0 422.7)"/><ellipse cx="1296.0" cy="429.3" rx="5.4" ry="3.5" fill="#f06a90" transform="rotate(10 1296.0 429.3)"/><ellipse cx="1304.5" cy="431.6" rx="5.2" ry="3.3" fill="#52ad50" transform="rotate(65 1304.5 431.6)"/><ellipse cx="1281.8" cy="438.7" rx="5.4" ry="3.1" fill="#4c2d83" transform="rotate(35 1281.8 438.7)"/><ellipse cx="1305.3" cy="446.2" rx="5.5" ry="2.9" fill="#4cae4a" transform="rotate(0 1305.3 446.2)"/><ellipse cx="1278.9" cy="451.4" rx="5.4" ry="3.5" fill="#f0628c" transform="rotate(-25 1278.9 451.4)"/><ellipse cx="1292.2" cy="451.2" rx="5.4" ry="3.1" fill="#4d2e84" transform="rotate(-40 1292.2 451.2)"/><ellipse cx="1283.5" cy="456.6" rx="5.2" ry="3.3" fill="#b81d34" transform="rotate(110 1283.5 456.6)"/><ellipse cx="1295.4" cy="460.1" rx="5.2" ry="2.9" fill="#4b2c82" transform="rotate(35 1295.4 460.1)"/><ellipse cx="1290.5" cy="476.2" rx="5.9" ry="3.3" fill="#e8b830" transform="rotate(-10 1290.5 476.2)"/><ellipse cx="1300.9" cy="472.8" rx="5.4" ry="3.1" fill="#ef5a23" transform="rotate(-5 1300.9 472.8)"/><ellipse cx="1304.0" cy="482.2" rx="5.2" ry="3.1" fill="#17131a" transform="rotate(25 1304.0 482.2)"/><rect x="1320.7" y="407" width="11.3" height="90" fill="#969696"/><rect x="1322" y="437.3" width="8.8" height="13" fill="#5a4e84"/><rect x="1322" y="454" width="8.8" height="13" fill="#5a4e84"/><rect x="1320.7" y="451" width="11.3" height="2" fill="#b0b0b0"/><rect x="1135.5" y="499.5" width="159" height="17" fill="#26272b" stroke="#5d5e62"/><text x="1138.5" y="512.5" font-family="DejaVu Sans Mono,Liberation Mono,monospace" font-size="13" fill="#d4d4d4">displace1</text><rect x="1296.5" y="499.5" width="17" height="17" fill="#2b2c30" stroke="#5d5e62"/><circle cx="1305" cy="508" r="4.3" fill="#2b3467"/><rect x="1314.5" y="499.5" width="17" height="17" fill="#2b2c30" stroke="#5d5e62"/><path d="M1323 502 L1324.4 506.6 L1329 508 L1324.4 509.4 L1323 514 L1321.6 509.4 L1317 508 L1321.6 506.6 Z" fill="#5c5c5e"/><rect x="1765" y="407" width="32" height="90" fill="#5b5086"/><rect x="1765.5" y="407.5" width="10" height="89" fill="#5b5086" stroke="#8472cc"/><rect x="1775.5" y="407.5" width="21" height="21.7" fill="#5b5086" stroke="#8472cc"/><rect x="1775.5" y="429.2" width="21" height="21.7" fill="#5b5086" stroke="#8472cc"/><rect x="1775.5" y="450.9" width="21" height="21.7" fill="#5b5086" stroke="#8472cc"/><rect x="1775.5" y="472.6" width="21" height="21.7" fill="#5b5086" stroke="#8472cc"/><rect x="1775.5" y="494.3" width="21" height="2.2" fill="#5b5086" stroke="#8472cc"/><circle cx="1785.3" cy="419.05" r="5.3" fill="none" stroke="#a29cc8" stroke-width="1.7"/><circle cx="1785.3" cy="419.05" r="2.7" fill="#a29cc8" opacity="0.85"/><path d="M1778.5 447.75 L1784.5 437.75 L1786.3 440.75 L1792.1 434.25 L1787.3 444.75 L1785.5 442.05 Z" fill="#a29cc8" stroke="#a29cc8" stroke-width="0.6" stroke-linejoin="round"/><path d="M1778.8 461.05 H1784.3 L1782.5 457.55 H1786.5 L1791.8 462.45 L1786.5 467.34999999999997 H1782.5 L1784.3 463.84999999999997 H1778.8 Z" fill="#a29cc8"/><circle cx="1784.5" cy="485.95" r="4.5" fill="#a29cc8"/><path d="M1786.1 482.04999999999995 C1786.3 476.84999999999997 1791.8999999999999 477.84999999999997 1791.1 482.74999999999994" fill="none" stroke="#a29cc8" stroke-width="1.8"/><rect x="1765" y="450.5" width="10.5" height="5" fill="#9083d6"/><rect x="1797" y="407" width="154" height="90" fill="#636363"/><rect x="1797" y="407" width="154" height="2.6" fill="#858585"/><rect x="1797" y="494.6" width="154" height="2.4" fill="#7c7c7c"/><rect x="1802" y="411" width="145" height="82" fill="#474747"/><rect x="1803" y="412" width="143" height="80" fill="#dfe0e2"/><path d="M1803 492 V469 L1839 492 Z" fill="#d9dadc"/><ellipse cx="1821.9" cy="427.7" rx="4.8" ry="3.3" fill="#e9c02f" transform="rotate(55 1821.9 427.7)"/><ellipse cx="1837.3" cy="426.4" rx="5.0" ry="3.1" fill="#4e2d86" transform="rotate(30 1837.3 426.4)"/><ellipse cx="1851.0" cy="422.2" rx="5.0" ry="3.3" fill="#c02036" transform="rotate(55 1851.0 422.2)"/><ellipse cx="1855.8" cy="430.8" rx="5.2" ry="3.3" fill="#4fae4f" transform="rotate(95 1855.8 430.8)"/><ellipse cx="1850.0" cy="434.7" rx="5.2" ry="3.1" fill="#ef5a22" transform="rotate(60 1850.0 434.7)"/><ellipse cx="1812.2" cy="435.8" rx="5.0" ry="3.3" fill="#be1e3a" transform="rotate(100 1812.2 435.8)"/><ellipse cx="1817.5" cy="443.1" rx="5.2" ry="3.5" fill="#e8b82e" transform="rotate(45 1817.5 443.1)"/><ellipse cx="1829.8" cy="440.8" rx="5.2" ry="3.6" fill="#f0608e" transform="rotate(115 1829.8 440.8)"/><ellipse cx="1842.3" cy="443.3" rx="4.8" ry="2.9" fill="#1a1418" transform="rotate(20 1842.3 443.3)"/><ellipse cx="1861.9" cy="437.0" rx="4.8" ry="2.9" fill="#e6ddd4" transform="rotate(20 1861.9 437.0)"/><ellipse cx="1851.9" cy="444.5" rx="5.2" ry="3.1" fill="#4cab4c" transform="rotate(95 1851.9 444.5)"/><ellipse cx="1861.9" cy="443.3" rx="5.2" ry="3.1" fill="#b81d34" transform="rotate(10 1861.9 443.3)"/><ellipse cx="1867.1" cy="449.5" rx="5.2" ry="3.1" fill="#be2038" transform="rotate(95 1867.1 449.5)"/><ellipse cx="1838.7" cy="451.2" rx="5.2" ry="2.9" fill="#ee5524" transform="rotate(20 1838.7 451.2)"/><ellipse cx="1831.1" cy="456.9" rx="5.0" ry="3.3" fill="#e5b52e" transform="rotate(70 1831.1 456.9)"/><ellipse cx="1821.9" cy="457.4" rx="5.0" ry="2.9" fill="#191418" transform="rotate(50 1821.9 457.4)"/><ellipse cx="1830.2" cy="466.8" rx="5.2" ry="3.1" fill="#17131a" transform="rotate(110 1830.2 466.8)"/><ellipse cx="1821.3" cy="470.3" rx="5.0" ry="3.3" fill="#e6b82c" transform="rotate(65 1821.3 470.3)"/><ellipse cx="1832.3" cy="476.2" rx="5.0" ry="3.3" fill="#4fb04d" transform="rotate(120 1832.3 476.2)"/><ellipse cx="1819.1" cy="483.2" rx="5.0" ry="3.1" fill="#4c2c84" transform="rotate(65 1819.1 483.2)"/><ellipse cx="1839.4" cy="484.2" rx="5.0" ry="3.1" fill="#f05a20" transform="rotate(-20 1839.4 484.2)"/><ellipse cx="1854.4" cy="463.7" rx="5.0" ry="2.9" fill="#18141a" transform="rotate(60 1854.4 463.7)"/><ellipse cx="1848.5" cy="469.3" rx="5.4" ry="3.1" fill="#b81b32" transform="rotate(-30 1848.5 469.3)"/><ellipse cx="1865.8" cy="467.3" rx="5.5" ry="3.8" fill="#f0608c" transform="rotate(35 1865.8 467.3)"/><ellipse cx="1859.1" cy="475.3" rx="5.9" ry="5.4" fill="#1ea6c6" transform="rotate(20 1859.1 475.3)"/><ellipse cx="1854.1" cy="482.8" rx="5.4" ry="3.3" fill="#e3b030" transform="rotate(70 1854.1 482.8)"/><ellipse cx="1870.8" cy="478.2" rx="5.4" ry="3.1" fill="#4b2d82" transform="rotate(30 1870.8 478.2)"/><ellipse cx="1886.8" cy="425.4" rx="5.2" ry="2.9" fill="#ef5b23" transform="rotate(5 1886.8 425.4)"/><ellipse cx="1877.3" cy="432.6" rx="5.0" ry="3.3" fill="#4d2e83" transform="rotate(100 1877.3 432.6)"/><ellipse cx="1884.7" cy="432.6" rx="5.2" ry="2.9" fill="#4a2b80" transform="rotate(-10 1884.7 432.6)"/><ellipse cx="1885.2" cy="438.9" rx="5.0" ry="3.1" fill="#55ad50" transform="rotate(-10 1885.2 438.9)"/><ellipse cx="1882.8" cy="446.2" rx="5.2" ry="3.3" fill="#f0668e" transform="rotate(45 1882.8 446.2)"/><ellipse cx="1876.8" cy="454.1" rx="5.2" ry="3.1" fill="#4eab4c" transform="rotate(20 1876.8 454.1)"/><ellipse cx="1888.2" cy="458.4" rx="5.2" ry="3.1" fill="#50ac4e" transform="rotate(50 1888.2 458.4)"/><ellipse cx="1894.3" cy="457.3" rx="5.0" ry="3.1" fill="#1a151a" transform="rotate(65 1894.3 457.3)"/><ellipse cx="1881.8" cy="464.1" rx="5.2" ry="3.3" fill="#f0648d" transform="rotate(10 1881.8 464.1)"/><ellipse cx="1900.6" cy="464.1" rx="5.2" ry="3.3" fill="#e4b434" transform="rotate(95 1900.6 464.1)"/><ellipse cx="1893.5" cy="466.6" rx="5.0" ry="3.5" fill="#ee5824" transform="rotate(100 1893.5 466.6)"/><ellipse cx="1899.7" cy="473.7" rx="5.4" ry="3.3" fill="#b91c32" transform="rotate(-25 1899.7 473.7)"/><ellipse cx="1907.9" cy="478.1" rx="5.2" ry="3.3" fill="#f05a22" transform="rotate(-50 1907.9 478.1)"/><ellipse cx="1886.8" cy="482.8" rx="5.0" ry="3.6" fill="#2458a6" transform="rotate(75 1886.8 482.8)"/><ellipse cx="1898.5" cy="422.7" rx="5.0" ry="2.9" fill="#ee5a24" transform="rotate(95 1898.5 422.7)"/><ellipse cx="1908.9" cy="427.1" rx="4.2" ry="4.3" fill="#2a5cb0" transform="rotate(0 1908.9 427.1)"/><ellipse cx="1918.0" cy="422.7" rx="5.2" ry="3.5" fill="#e8bc30" transform="rotate(100 1918.0 422.7)"/><ellipse cx="1926.0" cy="429.3" rx="5.4" ry="3.5" fill="#f06a90" transform="rotate(10 1926.0 429.3)"/><ellipse cx="1934.5" cy="431.6" rx="5.2" ry="3.3" fill="#52ad50" transform="rotate(65 1934.5 431.6)"/><ellipse cx="1911.8" cy="438.7" rx="5.4" ry="3.1" fill="#4c2d83" transform="rotate(35 1911.8 438.7)"/><ellipse cx="1935.3" cy="446.2" rx="5.5" ry="2.9" fill="#4cae4a" transform="rotate(0 1935.3 446.2)"/><ellipse cx="1908.9" cy="451.4" rx="5.4" ry="3.5" fill="#f0628c" transform="rotate(-25 1908.9 451.4)"/><ellipse cx="1922.2" cy="451.2" rx="5.4" ry="3.1" fill="#4d2e84" transform="rotate(-40 1922.2 451.2)"/><ellipse cx="1913.5" cy="456.6" rx="5.2" ry="3.3" fill="#b81d34" transform="rotate(110 1913.5 456.6)"/><ellipse cx="1925.4" cy="460.1" rx="5.2" ry="2.9" fill="#4b2c82" transform="rotate(35 1925.4 460.1)"/><ellipse cx="1920.5" cy="476.2" rx="5.9" ry="3.3" fill="#e8b830" transform="rotate(-10 1920.5 476.2)"/><ellipse cx="1930.9" cy="472.8" rx="5.4" ry="3.1" fill="#ef5a23" transform="rotate(-5 1930.9 472.8)"/><ellipse cx="1934.0" cy="482.2" rx="5.2" ry="3.1" fill="#17131a" transform="rotate(25 1934.0 482.2)"/><rect x="1950.7" y="407" width="11.3" height="90" fill="#969696"/><rect x="1952" y="437.3" width="8.8" height="13" fill="#5a4e84"/><rect x="1952" y="454" width="8.8" height="13" fill="#5a4e84"/><rect x="1950.7" y="451" width="11.3" height="2" fill="#b0b0b0"/><rect x="1765.5" y="499.5" width="159" height="17" fill="#26272b" stroke="#5d5e62"/><text x="1768.5" y="512.5" font-family="DejaVu Sans Mono,Liberation Mono,monospace" font-size="13" fill="#d4d4d4">out1</text><rect x="1926.5" y="499.5" width="17" height="17" fill="#2b2c30" stroke="#5d5e62"/><circle cx="1935" cy="508" r="4.3" fill="#2b3467"/><rect x="1944.5" y="499.5" width="17" height="17" fill="#2b2c30" stroke="#5d5e62"/><path d="M1953 502 L1954.4 506.6 L1959 508 L1954.4 509.4 L1953 514 L1951.6 509.4 L1947 508 L1951.6 506.6 Z" fill="#5c5c5e"/><rect x="513" y="520" width="23" height="53" fill="#5c5189"/><rect x="513.5" y="520.5" width="10" height="52" fill="#5c5189" stroke="#8673cf"/><rect x="523.5" y="520.5" width="12" height="13" fill="#5c5189" stroke="#8673cf"/><rect x="523.5" y="533.5" width="12" height="13" fill="#5c5189" stroke="#8673cf"/><rect x="523.5" y="546.5" width="12" height="13" fill="#5c5189" stroke="#8673cf"/><rect x="523.5" y="559.5" width="12" height="13" fill="#5c5189" stroke="#8673cf"/><circle cx="529.5" cy="527.0" r="2.8" fill="none" stroke="#a9a3cd" stroke-width="1"/><circle cx="529.5" cy="527.0" r="1.2" fill="#a9a3cd"/><path d="M526.0 543.5 L529.0 539.0 L530.0 540.5 L533.0 536.5 L530.3 541.0 L529.2 539.7 Z" fill="#a9a3cd" stroke="#a9a3cd" stroke-width="0.8"/><path d="M526.0 552.0 H529.5 L528.2 550.0 H530.2 L533.3 553.0 L530.2 556.0 H528.2 L529.5 554.0 H526.0 Z" fill="#a9a3cd"/><circle cx="528.7" cy="567.2" r="2.6" fill="#a9a3cd"/><path d="M530.0 565.0 C530.0 562.0 533.0 562.5 532.7 564.8" fill="none" stroke="#a9a3cd" stroke-width="1"/><rect x="536" y="520" width="163" height="53" fill="#686868"/><rect x="536" y="520" width="163" height="1.5" fill="#8a8a8a"/><rect x="541" y="524" width="155" height="45" fill="#161616"/><rect x="541" y="545.5" width="155" height="1.3" fill="#c9c9c9"/><rect x="699" y="520" width="11" height="53" fill="#969696"/><rect x="700.5" y="537" width="8.5" height="6" fill="#5a4e84"/><rect x="700.5" y="548" width="8.5" height="6.5" fill="#5a4e84"/><rect x="513.5" y="574.5" width="159" height="17" fill="#26272b" stroke="#5d5e62"/><text x="516.5" y="587.5" font-family="DejaVu Sans Mono,Liberation Mono,monospace" font-size="13" fill="#d4d4d4">chopto1</text><rect x="674.5" y="574.5" width="17" height="17" fill="#2b2c30" stroke="#5d5e62"/><circle cx="683" cy="583" r="4.3" fill="#2b3467"/><rect x="692.5" y="574.5" width="17" height="17" fill="#2b2c30" stroke="#5d5e62"/><path d="M701 577 L702.4 581.6 L707 583 L702.4 584.4 L701 589 L699.6 584.4 L695 583 L699.6 581.6 Z" fill="#5c5c5e"/><rect x="513" y="638" width="34" height="117" fill="#5c8a45"/><rect x="513.5" y="638.5" width="10" height="116" fill="#5c8a45" stroke="#86c85e"/><rect x="523.5" y="638.5" width="23" height="23.7" fill="#5c8a45" stroke="#86c85e"/><rect x="523.5" y="662.2" width="23" height="23.7" fill="#5c8a45" stroke="#86c85e"/><rect x="523.5" y="685.9" width="23" height="23.7" fill="#5c8a45" stroke="#86c85e"/><rect x="523.5" y="709.6" width="23" height="23.7" fill="#5c8a45" stroke="#86c85e"/><rect x="523.5" y="733.3" width="23" height="21.7" fill="#5c8a45" stroke="#86c85e"/><circle cx="534" cy="650.4499999999999" r="5.3" fill="none" stroke="#c6dcb6" stroke-width="1.7"/><circle cx="534" cy="650.4499999999999" r="2.7" fill="#c6dcb6" opacity="0.85"/><path d="M527.2 681.1499999999999 L533.2 671.1499999999999 L535 674.1499999999999 L540.8 667.6499999999999 L536 678.1499999999999 L534.2 675.4499999999998 Z" fill="#c6dcb6" stroke="#c6dcb6" stroke-width="0.6" stroke-linejoin="round"/><path d="M527.5 696.4499999999999 H533 L531.2 692.9499999999999 H535.2 L540.5 697.8499999999999 L535.2 702.7499999999999 H531.2 L533 699.2499999999999 H527.5 Z" fill="#c6dcb6"/><circle cx="533.2" cy="723.35" r="4.5" fill="#c6dcb6"/><path d="M534.8 719.45 C535 714.25 540.6 715.25 539.8 720.15" fill="none" stroke="#c6dcb6" stroke-width="1.8"/><rect x="513" y="694" width="10.5" height="3.5" fill="#0c0c0c"/><rect x="513" y="693" width="10.5" height="1" fill="#86c85e"/><rect x="547" y="638" width="152" height="117" fill="#686868"/><rect x="547" y="638" width="152" height="1.5" fill="#8a8a8a"/><rect x="547" y="753.7" width="152" height="1.3" fill="#8a8a8a"/><rect x="552" y="642" width="144" height="108" fill="#000"/><rect x="558.5" y="645" width="1" height="105" fill="#3a3a3a"/><rect x="580.0" y="645" width="1" height="105" fill="#3a3a3a"/><rect x="601.0" y="645" width="1" height="105" fill="#3a3a3a"/><rect x="621.7" y="645" width="1" height="105" fill="#3a3a3a"/><rect x="642.6" y="645" width="1" height="105" fill="#3a3a3a"/><rect x="663.6" y="645" width="1" height="105" fill="#3a3a3a"/><rect x="684.3" y="645" width="1" height="105" fill="#3a3a3a"/><path d="M559 645 V748" stroke="#6a6a6a" stroke-width="1" stroke-dasharray="5 3"/><rect x="557" y="657.5" width="133" height="1" fill="#4a4a4a"/><rect x="557" y="697.5" width="133" height="1" fill="#5c5c5c"/><path d="M567 738.5 H690" stroke="#4a4a4a" stroke-width="1" stroke-dasharray="7 3"/><text x="553" y="658.5" font-size="11.5" fill="#e6e6e6" font-family="DejaVu Sans,Liberation Sans,sans-serif">1</text><text x="553" y="699" font-size="11.5" fill="#e6e6e6" font-family="DejaVu Sans,Liberation Sans,sans-serif">0.5</text><text x="553" y="739" font-size="11.5" fill="#e6e6e6" font-family="DejaVu Sans,Liberation Sans,sans-serif">0</text><path d="M551.8 700.2 C552.9 700.4 556.6 702.9 558.4 701.1 C560.1 699.3 560.9 692.6 562.4 689.6 C563.9 686.6 565.7 683.5 567.6 683.0 C569.4 682.5 571.4 684.2 573.3 686.7 C575.2 689.3 577.1 695.7 579.1 698.2 C581.0 700.8 582.6 702.0 584.8 702.0 C587.0 701.9 589.6 698.8 592.0 697.6 C594.4 696.4 597.0 694.7 599.2 694.8 C601.3 694.9 602.8 696.4 604.9 698.2 C607.1 700.0 609.9 704.6 612.1 705.7 C614.2 706.7 615.7 705.8 617.8 704.5 C620.0 703.3 622.6 700.9 625.0 698.2 C627.4 695.5 630.3 691.3 632.2 688.2 C634.1 685.1 635.1 681.2 636.5 679.5 C637.9 677.9 639.4 677.4 640.8 678.1 C642.3 678.8 643.7 681.4 645.1 683.9 C646.6 686.3 648.0 690.7 649.4 693.0 C650.9 695.4 652.1 698.2 653.7 698.2 C655.4 698.2 657.8 694.5 659.5 693.0 C661.2 691.6 662.1 689.8 663.8 689.6 C665.5 689.4 667.6 690.7 669.5 691.9 C671.5 693.1 673.0 695.7 675.3 696.8 C677.5 697.8 680.4 698.1 683.0 698.2 C685.7 698.4 689.8 697.7 691.1 697.6" fill="none" stroke="#d81a22" stroke-width="1.1"/><circle cx="558.5" cy="701.5" r="2.4" fill="#d81a22"/><circle cx="683.5" cy="698.3" r="2.4" fill="#d81a22"/><text x="604" y="684" font-size="11.5" fill="#d81a22" font-family="DejaVu Sans,Liberation Sans,sans-serif">chan1</text><rect x="699" y="638" width="11" height="117" fill="#969696"/><rect x="700.5" y="677" width="8.5" height="16" fill="#5c8a45"/><rect x="700.5" y="699" width="8.5" height="16.5" fill="#5c8a45"/><rect x="699" y="695" width="11" height="2" fill="#111"/><rect x="513.5" y="756.5" width="141" height="17" fill="#26272b" stroke="#5d5e62"/><text x="516.5" y="769.5" font-family="DejaVu Sans Mono,Liberation Mono,monospace" font-size="13" fill="#d4d4d4">noise1</text><rect x="656.5" y="756.5" width="17" height="17" fill="#2b2c30" stroke="#5d5e62"/><circle cx="665" cy="765" r="4.3" fill="#3f5a34"/><rect x="674.5" y="756.5" width="17" height="17" fill="#2b2c30" stroke="#5d5e62"/><circle cx="683" cy="765" r="4.3" fill="#2b3467"/><rect x="692.5" y="756.5" width="17" height="17" fill="#2b2c30" stroke="#5d5e62"/><path d="M701 759 L702.4 763.6 L707 765 L702.4 766.4 L701 771 L699.6 766.4 L695 765 L699.6 763.6 Z" fill="#5c5c5e"/><path d="M611.5 570 V638" stroke="#6a7388" stroke-width="1.4" stroke-dasharray="1.6 2.4" fill="none"/><path d="M611.5 616.5 L616 627 H607 Z" fill="#586074"/><rect x="1423" y="365" width="241" height="178" fill="#18181a"/><clipPath id="gc"><rect x="1423" y="365" width="241" height="178"/></clipPath><g clip-path="url(#gc)"><path d="M1423 413.4 L1500 435.5" stroke="#cf4545" stroke-width="1.3"/><path d="M1664 418.4 L1590 441" stroke="#5b55e6" stroke-width="1.3"/><path d="M1546.5 365 V405" stroke="#4dbb45" stroke-width="1.4"/><path d="M1546.5 365.5 H1551" stroke="#4dbb45" stroke-width="1.2"/><defs><linearGradient id="gl" x1="0" y1="0" x2="1" y2="1"><stop offset="0" stop-color="#c6c6c6"/><stop offset="1" stop-color="#8e8e8e"/></linearGradient><linearGradient id="gr" x1="0" y1="0" x2="0.6" y2="1"><stop offset="0" stop-color="#cfcfcf"/><stop offset="1" stop-color="#9a9a9a"/></linearGradient><filter id="bl" x="-10%" y="-10%" width="120%" height="120%"><feGaussianBlur stdDeviation="0.95"/></filter></defs><polygon points="1480.3,410.4 1545.9,402.0 1614.3,411.1 1545.2,424.1" fill="#b9b9b9"/><polygon points="1480.3,410.4 1545.2,424.1 1545.9,531.3 1486.6,495.9" fill="url(#gl)"/><polygon points="1545.2,424.1 1614.3,411.1 1607.9,495.9 1545.9,531.3" fill="url(#gr)"/><clipPath id="cc"><polygon points="1480.3,410.4 1545.9,402.0 1614.3,411.1 1607.9,495.9 1545.9,531.3 1486.6,495.9"/></clipPath><g clip-path="url(#cc)"><g filter="url(#bl)" opacity="0.9"><ellipse cx="1483.6" cy="419.2" rx="2.2" ry="5.3" fill="#e9b92f" transform="rotate(-6 1483.6 419.2)"/><ellipse cx="1484.3" cy="424.8" rx="2.4" ry="4.8" fill="#e9b92f" transform="rotate(2 1484.3 424.8)"/><ellipse cx="1484.7" cy="436.2" rx="2.5" ry="5.9" fill="#ee5824" transform="rotate(3 1484.7 436.2)"/><ellipse cx="1488.2" cy="457.0" rx="2.4" ry="5.3" fill="#1ea6c6" transform="rotate(3 1488.2 457.0)"/><ellipse cx="1487.3" cy="470.5" rx="2.5" ry="5.0" fill="#4e2d86" transform="rotate(2 1487.3 470.5)"/><ellipse cx="1490.1" cy="481.2" rx="2.5" ry="5.6" fill="#ef5a22" transform="rotate(-2 1490.1 481.2)"/><ellipse cx="1488.9" cy="488.0" rx="2.6" ry="4.5" fill="#222" transform="rotate(-9 1488.9 488.0)"/><ellipse cx="1493.5" cy="418.4" rx="2.8" ry="4.6" fill="#4c2d83" transform="rotate(-4 1493.5 418.4)"/><ellipse cx="1491.4" cy="442.2" rx="2.6" ry="5.3" fill="#4c2d83" transform="rotate(17 1491.4 442.2)"/><ellipse cx="1493.6" cy="451.9" rx="2.7" ry="4.5" fill="#be1e3a" transform="rotate(-18 1493.6 451.9)"/><ellipse cx="1495.5" cy="459.3" rx="2.6" ry="5.4" fill="#ef5a22" transform="rotate(22 1495.5 459.3)"/><ellipse cx="1495.1" cy="474.9" rx="2.1" ry="5.1" fill="#4fae4f" transform="rotate(-15 1495.1 474.9)"/><ellipse cx="1494.7" cy="481.8" rx="2.6" ry="5.0" fill="#222" transform="rotate(18 1494.7 481.8)"/><ellipse cx="1499.9" cy="425.3" rx="2.7" ry="5.8" fill="#d82030" transform="rotate(-10 1499.9 425.3)"/><ellipse cx="1500.9" cy="431.9" rx="2.3" ry="4.5" fill="#2a5cb0" transform="rotate(-15 1500.9 431.9)"/><ellipse cx="1499.5" cy="452.2" rx="2.2" ry="5.3" fill="#4c2d83" transform="rotate(5 1499.5 452.2)"/><ellipse cx="1502.7" cy="466.3" rx="2.5" ry="5.5" fill="#1ea6c6" transform="rotate(-20 1502.7 466.3)"/><ellipse cx="1501.6" cy="472.9" rx="2.5" ry="4.5" fill="#1a1418" transform="rotate(-19 1501.6 472.9)"/><ellipse cx="1501.0" cy="487.8" rx="2.2" ry="5.3" fill="#50ac4e" transform="rotate(2 1501.0 487.8)"/><ellipse cx="1501.2" cy="495.0" rx="2.4" ry="5.4" fill="#50ac4e" transform="rotate(20 1501.2 495.0)"/><ellipse cx="1504.6" cy="422.8" rx="2.8" ry="5.2" fill="#ef5a22" transform="rotate(-8 1504.6 422.8)"/><ellipse cx="1506.5" cy="448.7" rx="2.2" ry="4.4" fill="#c02036" transform="rotate(20 1506.5 448.7)"/><ellipse cx="1509.2" cy="461.6" rx="2.6" ry="4.9" fill="#4e2d86" transform="rotate(6 1509.2 461.6)"/><ellipse cx="1507.3" cy="466.9" rx="2.2" ry="5.6" fill="#c02036" transform="rotate(1 1507.3 466.9)"/><ellipse cx="1507.8" cy="482.2" rx="2.8" ry="5.8" fill="#ee5824" transform="rotate(13 1507.8 482.2)"/><ellipse cx="1508.2" cy="490.7" rx="2.3" ry="4.4" fill="#be1e3a" transform="rotate(-21 1508.2 490.7)"/><ellipse cx="1508.6" cy="502.7" rx="2.3" ry="5.7" fill="#50ac4e" transform="rotate(10 1508.6 502.7)"/><ellipse cx="1512.9" cy="422.3" rx="2.3" ry="4.7" fill="#c02036" transform="rotate(-13 1512.9 422.3)"/><ellipse cx="1515.0" cy="439.8" rx="2.2" ry="5.5" fill="#1a1418" transform="rotate(18 1515.0 439.8)"/><ellipse cx="1513.0" cy="450.5" rx="2.3" ry="5.7" fill="#ee5824" transform="rotate(21 1513.0 450.5)"/><ellipse cx="1516.0" cy="456.3" rx="2.2" ry="6.0" fill="#ef5a22" transform="rotate(-21 1516.0 456.3)"/><ellipse cx="1513.7" cy="473.9" rx="2.8" ry="5.5" fill="#1ea6c6" transform="rotate(-7 1513.7 473.9)"/><ellipse cx="1513.5" cy="484.8" rx="2.6" ry="4.6" fill="#ef5a22" transform="rotate(11 1513.5 484.8)"/><ellipse cx="1518.1" cy="498.7" rx="2.2" ry="4.8" fill="#2a5cb0" transform="rotate(-9 1518.1 498.7)"/><ellipse cx="1515.8" cy="506.2" rx="2.7" ry="4.5" fill="#ef5a22" transform="rotate(11 1515.8 506.2)"/><ellipse cx="1522.4" cy="427.4" rx="2.7" ry="5.8" fill="#ef5a22" transform="rotate(-16 1522.4 427.4)"/><ellipse cx="1518.6" cy="437.4" rx="2.2" ry="4.4" fill="#f0608e" transform="rotate(13 1518.6 437.4)"/><ellipse cx="1519.8" cy="457.4" rx="2.6" ry="5.2" fill="#4fae4f" transform="rotate(-1 1519.8 457.4)"/><ellipse cx="1519.8" cy="470.4" rx="2.1" ry="4.6" fill="#c02036" transform="rotate(-2 1519.8 470.4)"/><ellipse cx="1524.5" cy="486.6" rx="2.5" ry="5.2" fill="#be1e3a" transform="rotate(1 1524.5 486.6)"/><ellipse cx="1523.0" cy="497.9" rx="2.8" ry="5.5" fill="#be1e3a" transform="rotate(17 1523.0 497.9)"/><ellipse cx="1524.9" cy="508.0" rx="2.4" ry="5.1" fill="#4c2d83" transform="rotate(-5 1524.9 508.0)"/><ellipse cx="1526.0" cy="441.8" rx="2.6" ry="5.8" fill="#50ac4e" transform="rotate(-15 1526.0 441.8)"/><ellipse cx="1530.9" cy="463.0" rx="2.8" ry="5.0" fill="#2a5cb0" transform="rotate(-1 1530.9 463.0)"/><ellipse cx="1529.2" cy="487.7" rx="2.2" ry="4.9" fill="#c02036" transform="rotate(10 1529.2 487.7)"/><ellipse cx="1529.3" cy="503.4" rx="2.4" ry="5.2" fill="#4e2d86" transform="rotate(-9 1529.3 503.4)"/><ellipse cx="1533.6" cy="433.8" rx="2.2" ry="4.8" fill="#f0608e" transform="rotate(18 1533.6 433.8)"/><ellipse cx="1533.2" cy="441.3" rx="2.7" ry="5.7" fill="#ef5a22" transform="rotate(-11 1533.2 441.3)"/><ellipse cx="1535.4" cy="455.1" rx="2.3" ry="4.8" fill="#f0608e" transform="rotate(13 1535.4 455.1)"/><ellipse cx="1533.5" cy="471.3" rx="2.5" ry="5.7" fill="#2a5cb0" transform="rotate(-18 1533.5 471.3)"/><ellipse cx="1535.6" cy="490.7" rx="2.5" ry="5.9" fill="#ef5a22" transform="rotate(-10 1535.6 490.7)"/><ellipse cx="1538.4" cy="523.4" rx="2.3" ry="4.7" fill="#e8b82e" transform="rotate(19 1538.4 523.4)"/><ellipse cx="1539.9" cy="430.8" rx="2.6" ry="4.8" fill="#be1e3a" transform="rotate(13 1539.9 430.8)"/><ellipse cx="1544.2" cy="470.9" rx="2.3" ry="5.1" fill="#d82030" transform="rotate(7 1544.2 470.9)"/><ellipse cx="1542.2" cy="486.8" rx="2.8" ry="4.9" fill="#2a5cb0" transform="rotate(-13 1542.2 486.8)"/><ellipse cx="1543.7" cy="498.2" rx="2.5" ry="5.0" fill="#e9b92f" transform="rotate(-7 1543.7 498.2)"/><ellipse cx="1539.8" cy="508.1" rx="2.7" ry="5.1" fill="#ee5824" transform="rotate(-20 1539.8 508.1)"/><ellipse cx="1543.1" cy="518.8" rx="2.3" ry="4.9" fill="#f0608e" transform="rotate(-2 1543.1 518.8)"/><ellipse cx="1547.3" cy="430.8" rx="2.3" ry="6.0" fill="#e9b92f" transform="rotate(-8 1547.3 430.8)"/><ellipse cx="1549.0" cy="443.1" rx="2.1" ry="5.0" fill="#c02036" transform="rotate(-1 1549.0 443.1)"/><ellipse cx="1548.8" cy="460.3" rx="2.2" ry="5.7" fill="#e9b92f" transform="rotate(-16 1548.8 460.3)"/><ellipse cx="1549.1" cy="471.4" rx="2.2" ry="5.9" fill="#ef5a22" transform="rotate(16 1549.1 471.4)"/><ellipse cx="1551.3" cy="485.9" rx="2.4" ry="4.9" fill="#ef5a22" transform="rotate(21 1551.3 485.9)"/><ellipse cx="1550.8" cy="491.0" rx="2.7" ry="5.5" fill="#d82030" transform="rotate(1 1550.8 491.0)"/><ellipse cx="1551.8" cy="503.1" rx="2.5" ry="5.2" fill="#c02036" transform="rotate(15 1551.8 503.1)"/><ellipse cx="1550.7" cy="524.3" rx="2.6" ry="5.5" fill="#c02036" transform="rotate(-12 1550.7 524.3)"/><ellipse cx="1560.0" cy="440.5" rx="2.4" ry="4.5" fill="#1ea6c6" transform="rotate(-21 1560.0 440.5)"/><ellipse cx="1557.4" cy="449.7" rx="2.7" ry="5.6" fill="#1ea6c6" transform="rotate(0 1557.4 449.7)"/><ellipse cx="1558.6" cy="478.8" rx="2.7" ry="5.8" fill="#1a1418" transform="rotate(-12 1558.6 478.8)"/><ellipse cx="1558.0" cy="491.2" rx="2.7" ry="4.5" fill="#e8b82e" transform="rotate(18 1558.0 491.2)"/><ellipse cx="1557.8" cy="505.5" rx="2.2" ry="4.6" fill="#e8b82e" transform="rotate(-11 1557.8 505.5)"/><ellipse cx="1555.3" cy="517.5" rx="2.4" ry="6.0" fill="#1a1418" transform="rotate(-18 1555.3 517.5)"/><ellipse cx="1564.0" cy="428.8" rx="2.4" ry="5.1" fill="#1ea6c6" transform="rotate(-17 1564.0 428.8)"/><ellipse cx="1567.5" cy="444.2" rx="2.1" ry="5.1" fill="#ef5a22" transform="rotate(14 1567.5 444.2)"/><ellipse cx="1564.1" cy="456.9" rx="2.8" ry="4.5" fill="#c02036" transform="rotate(-18 1564.1 456.9)"/><ellipse cx="1563.9" cy="465.9" rx="2.5" ry="4.8" fill="#50ac4e" transform="rotate(-17 1563.9 465.9)"/><ellipse cx="1566.6" cy="475.8" rx="2.1" ry="4.4" fill="#ef5a22" transform="rotate(-0 1566.6 475.8)"/><ellipse cx="1565.5" cy="487.5" rx="2.4" ry="4.6" fill="#4c2d83" transform="rotate(-7 1565.5 487.5)"/><ellipse cx="1565.9" cy="496.3" rx="2.7" ry="5.5" fill="#e8b82e" transform="rotate(18 1565.9 496.3)"/><ellipse cx="1561.8" cy="513.0" rx="2.7" ry="4.5" fill="#be1e3a" transform="rotate(19 1561.8 513.0)"/><ellipse cx="1571.6" cy="422.6" rx="2.6" ry="5.4" fill="#be1e3a" transform="rotate(-15 1571.6 422.6)"/><ellipse cx="1571.4" cy="441.5" rx="2.6" ry="5.1" fill="#ee5824" transform="rotate(-21 1571.4 441.5)"/><ellipse cx="1574.5" cy="450.1" rx="2.6" ry="4.5" fill="#ef5a22" transform="rotate(10 1574.5 450.1)"/><ellipse cx="1569.9" cy="466.4" rx="2.4" ry="5.9" fill="#f0608e" transform="rotate(2 1569.9 466.4)"/><ellipse cx="1570.9" cy="472.2" rx="2.6" ry="6.0" fill="#2a5cb0" transform="rotate(-11 1570.9 472.2)"/><ellipse cx="1571.7" cy="484.5" rx="2.2" ry="4.7" fill="#222" transform="rotate(-13 1571.7 484.5)"/><ellipse cx="1570.9" cy="496.0" rx="2.6" ry="5.1" fill="#2a5cb0" transform="rotate(2 1570.9 496.0)"/><ellipse cx="1578.0" cy="423.1" rx="2.3" ry="5.3" fill="#d82030" transform="rotate(17 1578.0 423.1)"/><ellipse cx="1581.3" cy="433.5" rx="2.3" ry="5.6" fill="#50ac4e" transform="rotate(-0 1581.3 433.5)"/><ellipse cx="1579.7" cy="462.8" rx="2.3" ry="4.8" fill="#ee5824" transform="rotate(-11 1579.7 462.8)"/><ellipse cx="1578.5" cy="469.4" rx="2.7" ry="5.9" fill="#d82030" transform="rotate(-16 1578.5 469.4)"/><ellipse cx="1580.5" cy="481.4" rx="2.5" ry="4.4" fill="#c02036" transform="rotate(-5 1580.5 481.4)"/><ellipse cx="1580.6" cy="490.5" rx="2.2" ry="4.6" fill="#4fae4f" transform="rotate(1 1580.6 490.5)"/><ellipse cx="1578.8" cy="506.4" rx="2.6" ry="5.1" fill="#e9b92f" transform="rotate(2 1578.8 506.4)"/><ellipse cx="1584.3" cy="448.7" rx="2.8" ry="5.4" fill="#d82030" transform="rotate(1 1584.3 448.7)"/><ellipse cx="1584.5" cy="453.8" rx="2.5" ry="5.3" fill="#2a5cb0" transform="rotate(-5 1584.5 453.8)"/><ellipse cx="1583.4" cy="469.7" rx="2.8" ry="4.8" fill="#2a5cb0" transform="rotate(-8 1583.4 469.7)"/><ellipse cx="1584.3" cy="477.7" rx="2.8" ry="5.5" fill="#c02036" transform="rotate(-8 1584.3 477.7)"/><ellipse cx="1587.0" cy="491.1" rx="2.2" ry="4.8" fill="#50ac4e" transform="rotate(-3 1587.0 491.1)"/><ellipse cx="1582.4" cy="501.6" rx="2.4" ry="5.5" fill="#e8b82e" transform="rotate(-13 1582.4 501.6)"/><ellipse cx="1595.4" cy="419.2" rx="2.8" ry="4.9" fill="#2a5cb0" transform="rotate(14 1595.4 419.2)"/><ellipse cx="1593.3" cy="436.7" rx="2.2" ry="5.4" fill="#2a5cb0" transform="rotate(5 1593.3 436.7)"/><ellipse cx="1596.6" cy="439.0" rx="2.5" ry="5.9" fill="#c02036" transform="rotate(-20 1596.6 439.0)"/><ellipse cx="1592.0" cy="451.1" rx="2.1" ry="5.0" fill="#4c2d83" transform="rotate(18 1592.0 451.1)"/><ellipse cx="1595.5" cy="468.4" rx="2.3" ry="4.7" fill="#ef5a22" transform="rotate(19 1595.5 468.4)"/><ellipse cx="1591.5" cy="486.4" rx="2.3" ry="4.7" fill="#be1e3a" transform="rotate(-22 1591.5 486.4)"/><ellipse cx="1604.9" cy="420.3" rx="2.6" ry="5.0" fill="#e8b82e" transform="rotate(12 1604.9 420.3)"/><ellipse cx="1602.1" cy="427.0" rx="2.4" ry="5.0" fill="#1a1418" transform="rotate(18 1602.1 427.0)"/><ellipse cx="1602.8" cy="440.9" rx="2.5" ry="4.8" fill="#ee5824" transform="rotate(6 1602.8 440.9)"/><ellipse cx="1597.7" cy="486.7" rx="2.7" ry="4.9" fill="#e9b92f" transform="rotate(-10 1597.7 486.7)"/><ellipse cx="1599.6" cy="492.3" rx="2.3" ry="4.4" fill="#4e2d86" transform="rotate(11 1599.6 492.3)"/><ellipse cx="1608.6" cy="433.1" rx="2.8" ry="5.0" fill="#d82030" transform="rotate(-11 1608.6 433.1)"/><ellipse cx="1606.3" cy="440.0" rx="2.1" ry="5.9" fill="#ef5a22" transform="rotate(-9 1606.3 440.0)"/><ellipse cx="1606.7" cy="448.5" rx="2.4" ry="5.7" fill="#1a1418" transform="rotate(-19 1606.7 448.5)"/><ellipse cx="1605.1" cy="460.0" rx="2.6" ry="5.2" fill="#f0608e" transform="rotate(2 1605.1 460.0)"/><ellipse cx="1607.8" cy="473.8" rx="2.3" ry="4.5" fill="#222" transform="rotate(-18 1607.8 473.8)"/><ellipse cx="1608.0" cy="476.8" rx="2.2" ry="5.1" fill="#2a5cb0" transform="rotate(17 1608.0 476.8)"/><ellipse cx="1606.3" cy="491.6" rx="2.2" ry="5.7" fill="#be1e3a" transform="rotate(-9 1606.3 491.6)"/><ellipse cx="1502.5" cy="411.2" rx="4.0" ry="1.0" fill="#1a1418" transform="rotate(-6 1502.5 411.2)"/><ellipse cx="1519.0" cy="415.1" rx="4.5" ry="1.0" fill="#ef5a22" transform="rotate(5 1519.0 415.1)"/><ellipse cx="1527.1" cy="417.3" rx="5.1" ry="1.3" fill="#e9b92f" transform="rotate(7 1527.1 417.3)"/><ellipse cx="1538.1" cy="419.2" rx="4.7" ry="1.3" fill="#4e2d86" transform="rotate(-5 1538.1 419.2)"/><ellipse cx="1514.8" cy="410.0" rx="4.0" ry="1.3" fill="#4fae4f" transform="rotate(7 1514.8 410.0)"/><ellipse cx="1526.5" cy="412.5" rx="3.6" ry="1.1" fill="#be1e3a" transform="rotate(-7 1526.5 412.5)"/><ellipse cx="1557.1" cy="417.7" rx="5.1" ry="1.1" fill="#e8b82e" transform="rotate(-2 1557.1 417.7)"/><ellipse cx="1549.0" cy="413.5" rx="5.1" ry="1.2" fill="#1ea6c6" transform="rotate(-6 1549.0 413.5)"/><ellipse cx="1544.5" cy="409.6" rx="4.1" ry="1.4" fill="#50ac4e" transform="rotate(-3 1544.5 409.6)"/><ellipse cx="1559.0" cy="412.7" rx="5.1" ry="1.2" fill="#ee5824" transform="rotate(-2 1559.0 412.7)"/><ellipse cx="1573.2" cy="415.0" rx="4.3" ry="1.3" fill="#50ac4e" transform="rotate(-2 1573.2 415.0)"/><ellipse cx="1537.9" cy="405.9" rx="4.6" ry="1.2" fill="#4e2d86" transform="rotate(7 1537.9 405.9)"/><ellipse cx="1560.4" cy="408.1" rx="3.8" ry="1.1" fill="#f0608e" transform="rotate(-5 1560.4 408.1)"/><ellipse cx="1567.8" cy="410.6" rx="5.1" ry="1.4" fill="#ef5a22" transform="rotate(-5 1567.8 410.6)"/><ellipse cx="1583.8" cy="413.2" rx="4.1" ry="1.2" fill="#4e2d86" transform="rotate(2 1583.8 413.2)"/><ellipse cx="1554.5" cy="405.2" rx="3.8" ry="1.3" fill="#ee5824" transform="rotate(-4 1554.5 405.2)"/><ellipse cx="1563.4" cy="407.1" rx="4.6" ry="0.9" fill="#f0608e" transform="rotate(7 1563.4 407.1)"/><ellipse cx="1575.1" cy="408.9" rx="4.9" ry="1.3" fill="#1ea6c6" transform="rotate(-7 1575.1 408.9)"/><ellipse cx="1594.5" cy="410.7" rx="4.1" ry="1.1" fill="#e8b82e" transform="rotate(-1 1594.5 410.7)"/></g></g><path d="M1546.5 402 V410" stroke="#4dbb45" stroke-width="1.4" opacity="0.8"/><path d="M1582 467.5 L1664 496" stroke="#cf4545" stroke-width="1.3"/><path d="M1423 494 L1510 467" stroke="#5b55e6" stroke-width="1.3"/><path d="M1546.5 531 V543" stroke="#4dbb45" stroke-width="1.4"/><rect x="1485.5" y="480" width="4" height="4" fill="#5b55e6" transform="translate(-23,0)"/><rect x="1625" y="482" width="4" height="3" fill="#cf4545"/><rect x="1544.5" y="530" width="4" height="4" fill="#4dbb45"/><text x="1553" y="372.5" font-family="DejaVu Sans,Liberation Sans,sans-serif" font-size="11" fill="#4dbb45">1y</text><text x="1469" y="438" font-family="DejaVu Sans,Liberation Sans,sans-serif" font-size="11" fill="#cf4545">-1x</text><text x="1600" y="439" font-family="DejaVu Sans,Liberation Sans,sans-serif" font-size="11" fill="#5b55e6">1z</text><text x="1464" y="481" font-family="DejaVu Sans,Liberation Sans,sans-serif" font-size="11" fill="#5b55e6">-1z</text><text x="1633" y="483" font-family="DejaVu Sans,Liberation Sans,sans-serif" font-size="11" fill="#cf4545">1x</text><text x="1547" y="526.5" font-family="DejaVu Sans,Liberation Sans,sans-serif" font-size="11" fill="#4dbb45">1y</text><path d="M1443 524 L1456 519" stroke="#5b55e6" stroke-width="1"/><path d="M1443 524 L1456 528 M1443 524 L1453 528 L1456 524" stroke="#cf4545" stroke-width="1" fill="none"/><path d="M1443 524 V538" stroke="#4dbb45" stroke-width="1"/><text x="1454" y="520" font-family="DejaVu Sans,Liberation Sans,sans-serif" font-size="11" font-size="9" fill="#5b55e6">z</text><text x="1454" y="529" font-family="DejaVu Sans,Liberation Sans,sans-serif" font-size="11" font-size="9" fill="#cf4545">x</text><text x="1444" y="539" font-family="DejaVu Sans,Liberation Sans,sans-serif" font-size="11" font-size="9" fill="#4dbb45">y</text></g><rect x="1423.5" y="544.5" width="221" height="17" fill="#26272b" stroke="#5d5e62"/><text x="1426.5" y="558" font-family="DejaVu Sans Mono,Liberation Mono,monospace" font-size="13" fill="#d4d4d4">geo1</text><rect x="1646.5" y="544.5" width="17" height="17" fill="#2b2c30" stroke="#5d5e62"/><path d="M1655 547 L1656.4 551.6 L1661 553 L1656.4 554.4 L1655 559 L1653.6 554.4 L1649 553 L1653.6 551.6 Z" fill="#f4f4f4"/><path d="M872.5 403.5 V419 L876 415.8 L878.6 421.5 L880.8 420.5 L878.3 415 H883.5 Z" fill="#fff" stroke="#000" stroke-width="1"/></svg>
<div class="a" style="left:302px;top:940px;width:1618px;height:68px;background:#2f3032"></div>
<div class="a" style="left:303px;top:940px;width:277px;height:68px;background:#0e0e1b;border:1px solid #3a3b40"></div>
<div class="t" style="left:308px;top:946px;font-size:13px;color:#878c9c">Start:</div>
<div class="t" style="left:308px;top:961px;font-size:13px;color:#878c9c">RStart:</div>
<div class="t" style="left:308px;top:976px;font-size:13px;color:#878c9c">FPS:</div>
<div class="t" style="left:308px;top:991px;font-size:13px;color:#878c9c">ResetF:</div>
<div class="t" style="left:438px;top:946px;font-size:13px;color:#878c9c">End:</div>
<div class="t" style="left:438px;top:961px;font-size:13px;color:#878c9c">REnd:</div>
<div class="t" style="left:438px;top:976px;font-size:13px;color:#878c9c">Tempo:</div>
<div class="t" style="left:438px;top:991px;font-size:13px;color:#878c9c">T Sig:</div>
<div class="t" style="left:369px;top:946px;font-size:13px;color:#6d9cf0">1</div>
<div class="t" style="left:369px;top:961px;font-size:13px;color:#6d9cf0">1</div>
<div class="t" style="left:368px;top:976px;font-size:13px;color:#6d9cf0">60.0</div>
<div class="t" style="left:369px;top:991px;font-size:13px;color:#6d9cf0">1</div>
<div class="t" style="left:498px;top:946px;font-size:13px;color:#6d9cf0">600</div>
<div class="t" style="left:498px;top:961px;font-size:13px;color:#6d9cf0">600</div>
<div class="t" style="left:498px;top:976px;font-size:13px;color:#6d9cf0">120.0</div>
<div class="t" style="left:498px;top:991px;font-size:13px;color:#6d9cf0">4</div>
<div class="t" style="left:533px;top:991px;font-size:13px;color:#6d9cf0">4</div>
<div class="a" style="left:580px;top:939px;width:1338px;height:15px;background:#0c0c0c;border:1px solid #4a4b4e"></div>
<div class="t" style="left:581.5px;top:939px;font-size:11px;color:#929498">1</div>
<div class="a" style="left:691px;top:941px;width:1px;height:12px;background:#7a7b7e"></div>
<div class="t" style="left:693px;top:939px;font-size:11px;color:#929498">51</div>
<div class="a" style="left:803px;top:941px;width:1px;height:12px;background:#7a7b7e"></div>
<div class="t" style="left:805px;top:939px;font-size:11px;color:#929498">101</div>
<div class="a" style="left:914px;top:941px;width:1px;height:12px;background:#7a7b7e"></div>
<div class="t" style="left:916px;top:939px;font-size:11px;color:#929498">151</div>
<div class="a" style="left:1026px;top:941px;width:1px;height:12px;background:#7a7b7e"></div>
<div class="t" style="left:1028px;top:939px;font-size:11px;color:#929498">201</div>
<div class="a" style="left:1138px;top:941px;width:1px;height:12px;background:#7a7b7e"></div>
<div class="t" style="left:1140px;top:939px;font-size:11px;color:#929498">251</div>
<div class="a" style="left:1249px;top:941px;width:1px;height:12px;background:#7a7b7e"></div>
<div class="t" style="left:1251px;top:939px;font-size:11px;color:#929498">301</div>
<div class="a" style="left:1361px;top:941px;width:1px;height:12px;background:#7a7b7e"></div>
<div class="t" style="left:1363px;top:939px;font-size:11px;color:#929498">351</div>
<div class="a" style="left:1473px;top:941px;width:1px;height:12px;background:#7a7b7e"></div>
<div class="t" style="left:1475px;top:939px;font-size:11px;color:#929498">401</div>
<div class="a" style="left:1585px;top:941px;width:1px;height:12px;background:#7a7b7e"></div>
<div class="t" style="left:1587px;top:939px;font-size:11px;color:#929498">451</div>
<div class="a" style="left:1697px;top:941px;width:1px;height:12px;background:#7a7b7e"></div>
<div class="t" style="left:1699px;top:939px;font-size:11px;color:#929498">501</div>
<div class="a" style="left:1808px;top:941px;width:1px;height:12px;background:#7a7b7e"></div>
<div class="t" style="left:1810px;top:939px;font-size:11px;color:#929498">551</div>
<div class="t" style="left:1895px;top:939px;font-size:11px;color:#929498">600</div>
<div class="a" style="left:1130px;top:940px;width:2px;height:11px;background:#7f96c8"></div>
<div class="a" style="left:580px;top:954px;width:1338px;height:11px;background:#2a2b2e;border:1px solid #4a4b4e;border-top:none"></div><div class="a" style="left:604px;top:955px;width:1289px;height:8px;background:#37496f"></div>
<div class="a" style="left:582px;top:955px;width:21px;height:8px;background:#505154;border:1px solid #6a6b6e"></div>
<div class="a" style="left:1894px;top:955px;width:21px;height:8px;background:#505154;border:1px solid #6a6b6e"></div>
<div class="t" style="left:588px;top:951px;font-size:8px;color:#8a8b8e">...</div>
<div class="t" style="left:1900px;top:951px;font-size:8px;color:#8a8b8e">...</div>
<div class="btn" style="left:584px;top:967px;width:20px;height:19px;line-height:19px;color:#66686e">/</div>
<div class="btn" style="left:584px;top:986px;width:20px;height:19px;line-height:19px;color:#66686e;font-family:'DejaVu Serif','Liberation Serif',serif">I</div>
<div class="btn" style="left:607px;top:967px;width:68px;height:18px;line-height:18px;background:#c98b4f;color:#5a1510;box-shadow:inset 0 0 0 1px #2f3032">TimeCode</div>
<div class="btn" style="left:607px;top:986px;width:68px;height:19px;line-height:20px">Beats</div>
<div class="a" style="left:677px;top:967px;width:200px;height:39px;background:#000;border:1px solid #4a4b4e"></div>
<div class="t" style="left:677px;top:967px;width:200px;height:39px;line-height:43px;text-align:center;font-size:26.5px;color:#7aa6f2">00:00:04:06</div>
<div class="a" style="left:879px;top:967px;width:135px;height:39px;background:#000;border:1px solid #4a4b4e"></div>
<div class="t" style="left:879px;top:967px;width:135px;height:39px;line-height:43px;text-align:center;font-size:26.5px;color:#7aa6f2">247</div>
<div class="btn" style="left:1016px;top:967px;width:39px;height:39px;background:#373942;border-color:#67686c"></div>
<div class="btn" style="left:1057px;top:967px;width:39px;height:39px;background:#373942;border-color:#67686c"></div>
<div class="btn" style="left:1098px;top:967px;width:39px;height:39px;background:#373942;border-color:#67686c"></div>
<div class="btn" style="left:1139px;top:967px;width:39px;height:39px;background:#c98b4f;border-color:#c98b4f"></div>
<div class="btn" style="left:1180px;top:967px;width:39px;height:39px;background:#373942;border-color:#67686c"></div>
<div class="btn" style="left:1221px;top:967px;width:39px;height:39px;background:#373942;border-color:#67686c"></div>
<svg class="a" style="left:1016px;top:967px" width="244" height="39">
<path d="M14.5 15 V24" stroke="#a6abb9" stroke-width="1.6"/><path d="M15.5 19.5 L20.5 15 V24 Z M20 19.5 L25 15 V24 Z" fill="#a6abb9"/>
<path d="M57.5 15 V24.5 M62 15 V24.5" stroke="#a6abb9" stroke-width="2"/>
<path d="M96 19.5 L102.5 14.5 V24.5 Z" fill="#a6abb9"/>
<path d="M146.5 19.5 L140 14.5 V24.5 Z" fill="#5a1510"/>
</svg>
<div class="t" style="left:1180px;top:979px;width:39px;text-align:center;color:#afb3be">-</div>
<div class="t" style="left:1221px;top:979px;width:39px;text-align:center;color:#afb3be;font-size:15px">+</div>
<div class="t" style="left:1265px;top:969px;color:#afb3be">Range Limit</div>
<div class="btn" style="left:1263px;top:988px;width:52px;height:18px;line-height:18px;background:#c98b4f;color:#5a1510;box-shadow:inset 0 0 0 1px #2f3032">Loop</div>
<div class="btn" style="left:1316px;top:988px;width:45px;height:18px;line-height:18px">Once</div>
</div></body></html>
